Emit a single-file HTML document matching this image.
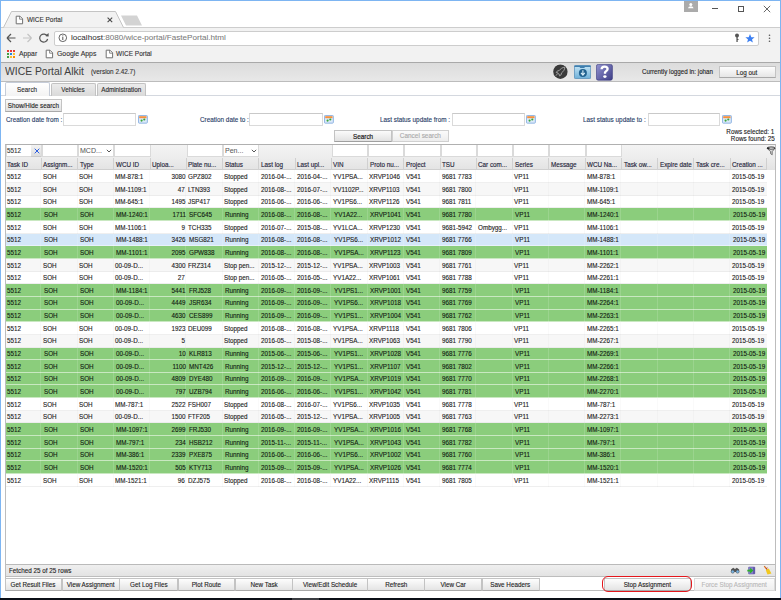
<!DOCTYPE html>
<html><head><meta charset="utf-8">
<style>
*{box-sizing:border-box;}
html,body{margin:0;padding:0;}
body{width:781px;height:600px;overflow:hidden;position:relative;background:#fff;font-family:"Liberation Sans",sans-serif;color:#222;-webkit-text-stroke-width:0.12px;}
.a{position:absolute;}
.t{position:absolute;white-space:nowrap;line-height:1;transform-origin:0 0;}
.tc{position:absolute;white-space:nowrap;line-height:1;text-align:center;}
.tc span{display:inline-block;transform-origin:50% 0;}
.tr{position:absolute;white-space:nowrap;line-height:1;text-align:right;}
.tr span{display:inline-block;transform-origin:100% 0;}
.btn{position:absolute;border:1px solid #c3c3c3;border-bottom-color:#a9a9a9;background:linear-gradient(#fdfdfd,#e6e6e6);}
.inp{position:absolute;border:1px solid #d2d2d2;border-top-color:#bdbdbd;background:#fff;}
</style></head><body>

<div class="a" style="left:1px;top:27px;width:779px;height:35px;background:#f2f2f2"></div>
<div class="a" style="left:1px;top:27px;width:779px;height:1px;background:#cdcdcd"></div>
<svg class="a" style="left:0;top:0" width="160" height="28">
<path d="M3.5 27.5 L11.5 11.5 L115.5 11.5 L123.5 27.5" fill="#f2f2f2" stroke="#c4c4c4" stroke-width="1"/>
<path d="M121 15.5 L137 15.5 L142 25.5 L126 25.5 Z" fill="#d3d3d3"/>
</svg>
<svg class="a" style="left:14.5px;top:15px" width="9" height="10"><path d="M1.2 1.2 H5 L7.6 3.8 V8.8 H1.2 Z" fill="#fff" stroke="#707070" stroke-width="1"/><path d="M4.6 1.2 V4.2 H7.6" fill="none" stroke="#707070" stroke-width="0.8"/></svg>
<div class="t" style="left:26.5px;top:15.64px;font-size:7.4px;color:#333;transform:scaleX(0.87);">WICE Portal</div>
<svg class="a" style="left:107px;top:17px" width="6" height="6"><path d="M0.6 0.6 L5.2 5.2 M5.2 0.6 L0.6 5.2" stroke="#4a4a4a" stroke-width="1.1"/></svg>
<div class="a" style="left:684px;top:1px;width:13.5px;height:11px;background:#ababab"></div>
<svg class="a" style="left:684px;top:0" width="14" height="12"><circle cx="6.8" cy="4.6" r="1.5" fill="#fff"/><path d="M4 8.2 Q4.3 6.3 6.8 6.3 Q9.3 6.3 9.6 8.2 Z" fill="#fff"/></svg>
<div class="a" style="left:712px;top:8px;width:6px;height:1px;background:#555"></div>
<div class="a" style="left:738px;top:5.5px;width:6px;height:6px;border:1px solid #555"></div>
<svg class="a" style="left:763px;top:5px" width="8" height="8"><path d="M0.8 0.8 L7.2 7.2 M7.2 0.8 L0.8 7.2" stroke="#555" stroke-width="0.9"/></svg>
<svg class="a" style="left:5px;top:32px" width="46" height="12">
<path d="M2 6 H10.5 M2 6 L6 2 M2 6 L6 10" stroke="#555" stroke-width="1.2" fill="none"/>
<path d="M26.5 6 H18 M26.5 6 L22.5 2 M26.5 6 L22.5 10" stroke="#c4c4c4" stroke-width="1.2" fill="none"/>
<path d="M42.3 4.3 A4 4 0 1 0 42.6 7" stroke="#555" stroke-width="1.2" fill="none"/>
<path d="M40.2 4 L43.7 4.6 L43.6 1" fill="#555"/>
</svg>
<div class="a" style="left:54px;top:30.5px;width:704.5px;height:15px;background:#fff;border:1px solid #cdcdcd;border-radius:2px"></div>
<svg class="a" style="left:58px;top:33px" width="10" height="10"><circle cx="4.8" cy="4.8" r="3.8" fill="none" stroke="#555" stroke-width="0.9"/><rect x="4.3" y="4" width="1" height="3" fill="#555"/><rect x="4.3" y="2.4" width="1" height="1" fill="#555"/></svg>
<div class="t" style="left:70.8px;top:33.93px;font-size:8px;color:#7a7a7a;transform:scaleX(1.012);-webkit-text-stroke-width:0.05px"><span style="color:#333">localhost</span>:8080/wice-portal/FastePortal.html</div>
<svg class="a" style="left:734px;top:33px" width="22" height="11">
<circle cx="3" cy="2.6" r="2" fill="#555"/><rect x="2.4" y="3" width="1.3" height="6" fill="#555"/><rect x="3" y="6" width="1.5" height="1" fill="#555"/>
<path d="M16 1 L17.3 4.2 L20.6 4.3 L18 6.4 L18.9 9.6 L16 7.8 L13.1 9.6 L14 6.4 L11.4 4.3 L14.7 4.2 Z" fill="#3b7ff2"/>
</svg>
<svg class="a" style="left:768px;top:34px" width="3" height="10"><circle cx="1.5" cy="1.2" r="0.8" fill="#555"/><circle cx="1.5" cy="4.2" r="0.8" fill="#555"/><circle cx="1.5" cy="7.2" r="0.8" fill="#555"/></svg>
<svg class="a" style="left:7px;top:50px" width="9" height="9">
<rect x="0" y="0" width="2" height="2" fill="#e53935"/><rect x="3" y="0" width="2" height="2" fill="#e53935"/><rect x="6" y="0" width="2" height="2" fill="#e53935"/>
<rect x="0" y="3" width="2" height="2" fill="#43a047"/><rect x="3" y="3" width="2" height="2" fill="#1e88e5"/><rect x="6" y="3" width="2" height="2" fill="#fbc02d"/>
<rect x="0" y="6" width="2" height="2" fill="#43a047"/><rect x="3" y="6" width="2" height="2" fill="#fbc02d"/><rect x="6" y="6" width="2" height="2" fill="#fb8c00"/>
</svg>
<div class="t" style="left:19px;top:50.34px;font-size:7.4px;color:#333;transform:scaleX(0.92);">Appar</div>
<svg class="a" style="left:45px;top:49px" width="9" height="10"><path d="M1.2 1.2 H5 L7.6 3.8 V8.8 H1.2 Z" fill="#fff" stroke="#707070" stroke-width="1"/><path d="M4.6 1.2 V4.2 H7.6" fill="none" stroke="#707070" stroke-width="0.8"/></svg>
<div class="t" style="left:57px;top:50.34px;font-size:7.4px;color:#333;transform:scaleX(0.93);">Google Apps</div>
<svg class="a" style="left:104.5px;top:49px" width="9" height="10"><path d="M1.2 1.2 H5 L7.6 3.8 V8.8 H1.2 Z" fill="#fff" stroke="#707070" stroke-width="1"/><path d="M4.6 1.2 V4.2 H7.6" fill="none" stroke="#707070" stroke-width="0.8"/></svg>
<div class="t" style="left:116px;top:50.34px;font-size:7.4px;color:#333;transform:scaleX(0.88);">WICE Portal</div>
<div class="a" style="left:1px;top:62px;width:779px;height:1px;background:#a9a9a9"></div>
<div class="a" style="left:1px;top:63px;width:779px;height:18px;background:linear-gradient(#dcdcdc,#e8e8e8)"></div>
<div class="a" style="left:1px;top:81px;width:779px;height:1px;background:#bcbcbc"></div>
<div class="t" style="left:5px;top:66.34px;font-size:10.7px;color:#404040;transform:scaleX(0.97);-webkit-text-stroke-width:0">WICE Portal Alkit</div>
<div class="t" style="left:91px;top:68.37px;font-size:7px;color:#333;transform:scaleX(0.91);">(version 2.42.7)</div>
<svg class="a" style="left:552px;top:63px" width="17" height="17">
<circle cx="8.4" cy="8.7" r="7.6" fill="#f4f4f4"/>
<circle cx="8.4" cy="8.7" r="7.2" fill="#3a3a3a"/>
<path d="M12.8 4.2 C10.5 4.4 8.6 5.6 7.2 7.6 L5.4 7.9 L4.2 9.6 L6 9.9 L6.3 10.8 L7.2 11.1 L7.5 12.9 L9.2 11.7 L9.5 9.9 C11.5 8.5 12.7 6.6 12.8 4.2 Z" fill="none" stroke="#a8a8a8" stroke-width="0.9" stroke-linejoin="round"/>
<path d="M5.6 10.6 L3.9 12.7" stroke="#a8a8a8" stroke-width="0.9"/>
</svg>
<svg class="a" style="left:574px;top:65.3px" width="17.2" height="14"><defs><linearGradient id="bf" x1="0" y1="0" x2="0" y2="1"><stop offset="0" stop-color="#c3e4f5"/><stop offset="1" stop-color="#6fb0d8"/></linearGradient></defs>
<rect x="0.4" y="0.6" width="16.3" height="13" rx="1" fill="url(#bf)" stroke="#4683b0" stroke-width="0.7"/>
<path d="M0.4 0.6 H16.7 V2 H11 L10.2 2.9 H6.3 L5.5 2 H0.4 Z" fill="#3f7eae"/>
<circle cx="8.9" cy="7.9" r="4" fill="#21618e"/>
<path d="M8.9 5.2 V9.6 M7 7.9 L8.9 10.2 L10.8 7.9" stroke="#d9eef9" stroke-width="1.1" fill="none"/>
</svg>
<svg class="a" style="left:595.5px;top:64px" width="17" height="17"><defs><linearGradient id="pq" x1="0" y1="0" x2="1" y2="1"><stop offset="0" stop-color="#9292d0"/><stop offset="1" stop-color="#3e3e86"/></linearGradient></defs>
<rect x="0.4" y="0.4" width="16" height="15.8" rx="1.8" fill="url(#pq)" stroke="#34347a" stroke-width="0.6"/>
<path d="M5.6 5.3 C5.6 3.6 6.9 2.6 8.5 2.6 C10.3 2.6 11.6 3.6 11.6 5.1 C11.6 6.8 9.3 7.3 9 8.6 V9.8" fill="none" stroke="#fff" stroke-width="2.3"/>
<ellipse cx="8.9" cy="12.6" rx="1.7" ry="1.4" fill="#fff"/>
</svg>
<div class="t" style="left:642px;top:68.37px;font-size:7px;color:#222;transform:scaleX(0.89);">Currently logged in: johan</div>
<div class="a" style="left:718.5px;top:66.3px;width:57px;height:12px;border:1px solid #c3c3c3;border-bottom-color:#a9a9a9;background:linear-gradient(#fdfdfd,#e6e6e6)"></div>
<div class="tc" style="left:718.5px;top:69.07px;width:57px;font-size:7px;color:#222;"><span style="transform:scaleX(0.9)">Log out</span></div>
<div class="a" style="left:1px;top:95px;width:779px;height:1px;background:#d4d8df"></div>
<div class="a" style="left:4.5px;top:82px;width:45px;height:14px;background:linear-gradient(#ffffff,#f3f3f3);border:1px solid #c5ccd8;border-bottom:none;border-radius:2px 2px 0 0"></div>
<div class="tc" style="left:4.5px;top:85.97px;width:45px;font-size:7px;color:#2a2a2a;"><span style="transform:scaleX(0.9)">Search</span></div>
<div class="a" style="left:51px;top:82.5px;width:44.5px;height:13px;background:linear-gradient(#ebebeb,#d9d9d9);border:1px solid #c2c2c2;border-bottom:none;border-radius:2px 2px 0 0"></div>
<div class="tc" style="left:51px;top:85.97px;width:44.5px;font-size:7px;color:#2a2a2a;"><span style="transform:scaleX(0.9)">Vehicles</span></div>
<div class="a" style="left:97px;top:82.5px;width:48.5px;height:13px;background:linear-gradient(#ebebeb,#d9d9d9);border:1px solid #c2c2c2;border-bottom:none;border-radius:2px 2px 0 0"></div>
<div class="tc" style="left:97px;top:85.97px;width:48.5px;font-size:7px;color:#2a2a2a;"><span style="transform:scaleX(0.9)">Administration</span></div>
<div class="a" style="left:4.5px;top:99px;width:57.5px;height:12.5px;border:1px solid #c3c3c3;border-bottom-color:#a9a9a9;background:linear-gradient(#f9f9f9,#e2e2e2)"></div>
<div class="tc" style="left:4.5px;top:101.77px;width:57.5px;font-size:7px;color:#222;"><span style="transform:scaleX(0.9)">Show/Hide search</span></div>
<div class="t" style="left:6px;top:115.57px;font-size:7px;color:#253a66;transform:scaleX(0.91);">Creation date from :</div>
<div class="a" style="left:63.3px;top:113px;width:72.7px;height:12.5px;border:1px solid #dadada;border-top-color:#c9c9c9;background:#fff"></div>
<svg class="a" style="left:138px;top:114.6px" width="10" height="9"><rect x="0.45" y="0.45" width="8.9" height="7.7" rx="0.8" fill="#dce9fa" stroke="#86aee0" stroke-width="0.9"/><rect x="1.2" y="1.2" width="7.3" height="2" fill="#f7913f"/><circle cx="3.6" cy="5.6" r="1.1" fill="#3aa63a"/><circle cx="6.3" cy="4.5" r="1.1" fill="#3aa63a"/></svg>
<div class="t" style="left:199.8px;top:115.57px;font-size:7px;color:#253a66;transform:scaleX(0.91);">Creation date to :</div>
<div class="a" style="left:249.4px;top:113px;width:73.4px;height:12.5px;border:1px solid #dadada;border-top-color:#c9c9c9;background:#fff"></div>
<svg class="a" style="left:324.3px;top:114.6px" width="10" height="9"><rect x="0.45" y="0.45" width="8.9" height="7.7" rx="0.8" fill="#dce9fa" stroke="#86aee0" stroke-width="0.9"/><rect x="1.2" y="1.2" width="7.3" height="2" fill="#f7913f"/><circle cx="3.6" cy="5.6" r="1.1" fill="#3aa63a"/><circle cx="6.3" cy="4.5" r="1.1" fill="#3aa63a"/></svg>
<div class="t" style="left:380.2px;top:115.57px;font-size:7px;color:#253a66;transform:scaleX(0.91);">Last status update from :</div>
<div class="a" style="left:452px;top:113px;width:72.7px;height:12.5px;border:1px solid #dadada;border-top-color:#c9c9c9;background:#fff"></div>
<svg class="a" style="left:526px;top:114.6px" width="10" height="9"><rect x="0.45" y="0.45" width="8.9" height="7.7" rx="0.8" fill="#dce9fa" stroke="#86aee0" stroke-width="0.9"/><rect x="1.2" y="1.2" width="7.3" height="2" fill="#f7913f"/><circle cx="3.6" cy="5.6" r="1.1" fill="#3aa63a"/><circle cx="6.3" cy="4.5" r="1.1" fill="#3aa63a"/></svg>
<div class="t" style="left:583px;top:115.57px;font-size:7px;color:#253a66;transform:scaleX(0.91);">Last status update to :</div>
<div class="a" style="left:647.6px;top:113px;width:72px;height:12.5px;border:1px solid #dadada;border-top-color:#c9c9c9;background:#fff"></div>
<svg class="a" style="left:721.8px;top:114.6px" width="10" height="9"><rect x="0.45" y="0.45" width="8.9" height="7.7" rx="0.8" fill="#dce9fa" stroke="#86aee0" stroke-width="0.9"/><rect x="1.2" y="1.2" width="7.3" height="2" fill="#f7913f"/><circle cx="3.6" cy="5.6" r="1.1" fill="#3aa63a"/><circle cx="6.3" cy="4.5" r="1.1" fill="#3aa63a"/></svg>
<div class="a" style="left:334.2px;top:129.5px;width:57.7px;height:12.2px;border:1px solid #c3c3c3;border-bottom-color:#a0a0a0;background:linear-gradient(#fbfbfb,#e2e2e2)"></div>
<div class="tc" style="left:334.2px;top:132.67px;width:57.7px;font-size:7px;color:#1a1a1a;-webkit-text-stroke-width:0.2px"><span style="transform:scaleX(0.9)">Search</span></div>
<div class="a" style="left:391.6px;top:129.5px;width:57.3px;height:12.2px;border:1px solid #d0d0d0;background:linear-gradient(#fbfbfb,#ededed)"></div>
<div class="tc" style="left:391.6px;top:132.47px;width:57.3px;font-size:7px;color:#a9a9a9;"><span style="transform:scaleX(0.92)">Cancel search</span></div>
<div class="tr" style="left:674.6px;top:128.07px;width:100px;font-size:7px;color:#222;"><span style="transform:scaleX(0.9)">Rows selected: 1</span></div>
<div class="tr" style="left:674.6px;top:134.77px;width:100px;font-size:7px;color:#222;"><span style="transform:scaleX(0.9)">Rows found: 25</span></div>
<div class="a" style="left:5px;top:144px;width:771px;height:447px;border:1px solid #bdbdbd;border-top-color:#b0b0b0;background:#fff"></div>
<div class="a" style="left:6px;top:145px;width:769px;height:24.5px;background:linear-gradient(#f3f3f3 0%,#ededed 50%,#e3e3e3 100%)"></div>
<div class="a" style="left:6px;top:169px;width:760.5px;height:1px;background:#cfcfcf"></div>
<div class="a" style="left:5.5px;top:145px;width:36.26px;height:12px;background:#fff;border:1px solid #dadada;border-top:none"></div>
<div class="t" style="left:6.9px;top:147.27px;font-size:7px;color:#333;transform:scaleX(0.9);">5512</div>
<div class="a" style="left:30.8px;top:145.3px;width:10.5px;height:11.4px;background:linear-gradient(#f3f3f3,#dedede);border-bottom:1px solid #c9c9c9"></div>
<svg class="a" style="left:33.5px;top:148px" width="6" height="6"><path d="M0.7 0.7 L5.3 5.3 M5.3 0.7 L0.7 5.3" stroke="#2d5fe0" stroke-width="1"/></svg>
<div class="a" style="left:40.76px;top:157.5px;width:1px;height:12px;background:#d0d0d0"></div>
<div class="t" style="left:7.1px;top:160.67px;font-size:7px;color:#25253a;transform:scaleX(0.9);-webkit-text-stroke-width:0.15px">Task ID</div>
<div class="a" style="left:41.76px;top:145px;width:36.26px;height:12px;background:#fff;border:1px solid #dadada;border-top:none"></div>
<div class="a" style="left:77.02px;top:157.5px;width:1px;height:12px;background:#d0d0d0"></div>
<div class="t" style="left:43.36px;top:160.67px;font-size:7px;color:#25253a;transform:scaleX(0.9);-webkit-text-stroke-width:0.15px">Assignm...</div>
<div class="a" style="left:78.02px;top:145px;width:36.26px;height:12px;background:#fff;border:1px solid #dadada;border-top:none"></div>
<div class="t" style="left:80.22px;top:147.04px;font-size:7.4px;color:#5a5a5a;transform:scaleX(0.95);-webkit-text-stroke-width:0.05px">MCD...</div>
<svg class="a" style="left:105.82px;top:149.3px" width="6" height="4"><path d="M0.8 0.8 L3 3 L5.2 0.8" stroke="#444" stroke-width="0.9" fill="none"/></svg>
<div class="a" style="left:113.28px;top:157.5px;width:1px;height:12px;background:#d0d0d0"></div>
<div class="t" style="left:79.62px;top:160.67px;font-size:7px;color:#25253a;transform:scaleX(0.9);-webkit-text-stroke-width:0.15px">Type</div>
<div class="a" style="left:114.28px;top:145px;width:36.26px;height:12px;background:#fff;border:1px solid #dadada;border-top:none"></div>
<div class="a" style="left:149.54px;top:157.5px;width:1px;height:12px;background:#d0d0d0"></div>
<div class="t" style="left:115.88px;top:160.67px;font-size:7px;color:#25253a;transform:scaleX(0.9);-webkit-text-stroke-width:0.15px">WCU ID</div>
<div class="a" style="left:185.8px;top:157.5px;width:1px;height:12px;background:#d0d0d0"></div>
<div class="t" style="left:152.14px;top:160.67px;font-size:7px;color:#25253a;transform:scaleX(0.9);-webkit-text-stroke-width:0.15px">Uploa...</div>
<div class="a" style="left:186.8px;top:145px;width:36.26px;height:12px;background:#fff;border:1px solid #dadada;border-top:none"></div>
<div class="a" style="left:222.06px;top:157.5px;width:1px;height:12px;background:#d0d0d0"></div>
<div class="t" style="left:188.4px;top:160.67px;font-size:7px;color:#25253a;transform:scaleX(0.9);-webkit-text-stroke-width:0.15px">Plate nu...</div>
<div class="a" style="left:223.06px;top:145px;width:36.26px;height:12px;background:#fff;border:1px solid #dadada;border-top:none"></div>
<div class="t" style="left:225.26px;top:147.04px;font-size:7.4px;color:#5a5a5a;transform:scaleX(0.95);-webkit-text-stroke-width:0.05px">Pen...</div>
<svg class="a" style="left:250.86px;top:149.3px" width="6" height="4"><path d="M0.8 0.8 L3 3 L5.2 0.8" stroke="#444" stroke-width="0.9" fill="none"/></svg>
<div class="a" style="left:258.32px;top:157.5px;width:1px;height:12px;background:#d0d0d0"></div>
<div class="t" style="left:224.66px;top:160.67px;font-size:7px;color:#25253a;transform:scaleX(0.9);-webkit-text-stroke-width:0.15px">Status</div>
<div class="a" style="left:294.58px;top:157.5px;width:1px;height:12px;background:#d0d0d0"></div>
<div class="t" style="left:260.92px;top:160.67px;font-size:7px;color:#25253a;transform:scaleX(0.9);-webkit-text-stroke-width:0.15px">Last log</div>
<div class="a" style="left:330.84px;top:157.5px;width:1px;height:12px;background:#d0d0d0"></div>
<div class="t" style="left:297.18px;top:160.67px;font-size:7px;color:#25253a;transform:scaleX(0.9);-webkit-text-stroke-width:0.15px">Last upl...</div>
<div class="a" style="left:331.84px;top:145px;width:36.26px;height:12px;background:#fff;border:1px solid #dadada;border-top:none"></div>
<div class="a" style="left:367.1px;top:157.5px;width:1px;height:12px;background:#d0d0d0"></div>
<div class="t" style="left:333.44px;top:160.67px;font-size:7px;color:#25253a;transform:scaleX(0.9);-webkit-text-stroke-width:0.15px">VIN</div>
<div class="a" style="left:368.1px;top:145px;width:36.26px;height:12px;background:#fff;border:1px solid #dadada;border-top:none"></div>
<div class="a" style="left:403.36px;top:157.5px;width:1px;height:12px;background:#d0d0d0"></div>
<div class="t" style="left:369.7px;top:160.67px;font-size:7px;color:#25253a;transform:scaleX(0.9);-webkit-text-stroke-width:0.15px">Proto nu...</div>
<div class="a" style="left:404.36px;top:145px;width:36.26px;height:12px;background:#fff;border:1px solid #dadada;border-top:none"></div>
<div class="a" style="left:439.62px;top:157.5px;width:1px;height:12px;background:#d0d0d0"></div>
<div class="t" style="left:405.96px;top:160.67px;font-size:7px;color:#25253a;transform:scaleX(0.9);-webkit-text-stroke-width:0.15px">Project</div>
<div class="a" style="left:440.62px;top:145px;width:36.26px;height:12px;background:#fff;border:1px solid #dadada;border-top:none"></div>
<div class="a" style="left:475.88px;top:157.5px;width:1px;height:12px;background:#d0d0d0"></div>
<div class="t" style="left:442.22px;top:160.67px;font-size:7px;color:#25253a;transform:scaleX(0.9);-webkit-text-stroke-width:0.15px">TSU</div>
<div class="a" style="left:476.88px;top:145px;width:36.26px;height:12px;background:#fff;border:1px solid #dadada;border-top:none"></div>
<div class="a" style="left:512.14px;top:157.5px;width:1px;height:12px;background:#d0d0d0"></div>
<div class="t" style="left:478.48px;top:160.67px;font-size:7px;color:#25253a;transform:scaleX(0.9);-webkit-text-stroke-width:0.15px">Car com...</div>
<div class="a" style="left:513.14px;top:145px;width:36.26px;height:12px;background:#fff;border:1px solid #dadada;border-top:none"></div>
<div class="a" style="left:548.4px;top:157.5px;width:1px;height:12px;background:#d0d0d0"></div>
<div class="t" style="left:514.74px;top:160.67px;font-size:7px;color:#25253a;transform:scaleX(0.9);-webkit-text-stroke-width:0.15px">Series</div>
<div class="a" style="left:549.4px;top:145px;width:36.26px;height:12px;background:#fff;border:1px solid #dadada;border-top:none"></div>
<div class="a" style="left:584.66px;top:157.5px;width:1px;height:12px;background:#d0d0d0"></div>
<div class="t" style="left:551px;top:160.67px;font-size:7px;color:#25253a;transform:scaleX(0.9);-webkit-text-stroke-width:0.15px">Message</div>
<div class="a" style="left:585.66px;top:145px;width:36.26px;height:12px;background:#fff;border:1px solid #dadada;border-top:none"></div>
<div class="a" style="left:620.92px;top:157.5px;width:1px;height:12px;background:#d0d0d0"></div>
<div class="t" style="left:587.26px;top:160.67px;font-size:7px;color:#25253a;transform:scaleX(0.9);-webkit-text-stroke-width:0.15px">WCU Na...</div>
<div class="a" style="left:657.18px;top:157.5px;width:1px;height:12px;background:#d0d0d0"></div>
<div class="t" style="left:623.52px;top:160.67px;font-size:7px;color:#25253a;transform:scaleX(0.9);-webkit-text-stroke-width:0.15px">Task ow...</div>
<div class="a" style="left:693.44px;top:157.5px;width:1px;height:12px;background:#d0d0d0"></div>
<div class="t" style="left:659.78px;top:160.67px;font-size:7px;color:#25253a;transform:scaleX(0.9);-webkit-text-stroke-width:0.15px">Expire date</div>
<div class="a" style="left:729.7px;top:157.5px;width:1px;height:12px;background:#d0d0d0"></div>
<div class="t" style="left:696.04px;top:160.67px;font-size:7px;color:#25253a;transform:scaleX(0.9);-webkit-text-stroke-width:0.15px">Task cre...</div>
<div class="a" style="left:765.96px;top:157.5px;width:1px;height:12px;background:#d0d0d0"></div>
<div class="t" style="left:732.3px;top:160.67px;font-size:7px;color:#25253a;transform:scaleX(0.9);-webkit-text-stroke-width:0.15px">Creation ...</div>
<svg class="a" style="left:766px;top:145.5px" width="10" height="10">
<path d="M1 2.3 C1 1.2 9 0.8 9.2 2 L6.2 5.6 V8.8 L4.6 7.6 V5.6 Z" fill="#d8d8d8" stroke="#4a4a4a" stroke-width="0.7"/>
<ellipse cx="5" cy="2.1" rx="4" ry="1.1" fill="#f4f4f4" stroke="#2a2a2a" stroke-width="0.8"/>
<ellipse cx="2.3" cy="2.2" rx="1.4" ry="0.8" fill="#222"/>
</svg>
<div class="a" style="left:6px;top:170px;width:760.5px;height:13px;background:#ffffff"></div>
<div class="a" style="left:6px;top:183px;width:760.5px;height:13px;background:#f7f7f7"></div>
<div class="a" style="left:6px;top:196px;width:760.5px;height:12px;background:#ffffff"></div>
<div class="a" style="left:6px;top:208px;width:760.5px;height:13px;background:#8bcd7c"></div>
<div class="a" style="left:6px;top:221px;width:760.5px;height:13px;background:#ffffff"></div>
<div class="a" style="left:6px;top:234px;width:760.5px;height:12px;background:#d4e7f9"></div>
<div class="a" style="left:6px;top:246px;width:760.5px;height:13px;background:#8bcd7c"></div>
<div class="a" style="left:6px;top:259px;width:760.5px;height:13px;background:#f7f7f7"></div>
<div class="a" style="left:6px;top:272px;width:760.5px;height:12px;background:#ffffff"></div>
<div class="a" style="left:6px;top:284px;width:760.5px;height:13px;background:#8bcd7c"></div>
<div class="a" style="left:6px;top:297px;width:760.5px;height:13px;background:#8bcd7c"></div>
<div class="a" style="left:6px;top:310px;width:760.5px;height:12px;background:#8bcd7c"></div>
<div class="a" style="left:6px;top:322px;width:760.5px;height:13px;background:#ffffff"></div>
<div class="a" style="left:6px;top:335px;width:760.5px;height:13px;background:#f7f7f7"></div>
<div class="a" style="left:6px;top:348px;width:760.5px;height:12px;background:#8bcd7c"></div>
<div class="a" style="left:6px;top:360px;width:760.5px;height:13px;background:#8bcd7c"></div>
<div class="a" style="left:6px;top:373px;width:760.5px;height:12px;background:#8bcd7c"></div>
<div class="a" style="left:6px;top:385px;width:760.5px;height:13px;background:#8bcd7c"></div>
<div class="a" style="left:6px;top:398px;width:760.5px;height:13px;background:#ffffff"></div>
<div class="a" style="left:6px;top:411px;width:760.5px;height:12px;background:#f7f7f7"></div>
<div class="a" style="left:6px;top:423px;width:760.5px;height:13px;background:#8bcd7c"></div>
<div class="a" style="left:6px;top:436px;width:760.5px;height:13px;background:#8bcd7c"></div>
<div class="a" style="left:6px;top:449px;width:760.5px;height:12px;background:#8bcd7c"></div>
<div class="a" style="left:6px;top:461px;width:760.5px;height:13px;background:#8bcd7c"></div>
<div class="a" style="left:6px;top:474px;width:760.5px;height:13px;background:#ffffff"></div>
<div class="a" style="left:6px;top:182px;width:760.5px;height:1px;background:#efefef"></div>
<div class="a" style="left:6px;top:195px;width:760.5px;height:1px;background:#ececec"></div>
<div class="a" style="left:6px;top:207px;width:760.5px;height:1px;background:#efefef"></div>
<div class="a" style="left:6px;top:220px;width:760.5px;height:1px;background:#c9e8c1"></div>
<div class="a" style="left:6px;top:233px;width:760.5px;height:1px;background:#efefef"></div>
<div class="a" style="left:6px;top:245px;width:760.5px;height:1px;background:#e8f1fb"></div>
<div class="a" style="left:6px;top:258px;width:760.5px;height:1px;background:#c9e8c1"></div>
<div class="a" style="left:6px;top:271px;width:760.5px;height:1px;background:#ececec"></div>
<div class="a" style="left:6px;top:283px;width:760.5px;height:1px;background:#efefef"></div>
<div class="a" style="left:6px;top:296px;width:760.5px;height:1px;background:#c9e8c1"></div>
<div class="a" style="left:6px;top:309px;width:760.5px;height:1px;background:#c9e8c1"></div>
<div class="a" style="left:6px;top:321px;width:760.5px;height:1px;background:#c9e8c1"></div>
<div class="a" style="left:6px;top:334px;width:760.5px;height:1px;background:#efefef"></div>
<div class="a" style="left:6px;top:347px;width:760.5px;height:1px;background:#ececec"></div>
<div class="a" style="left:6px;top:359px;width:760.5px;height:1px;background:#c9e8c1"></div>
<div class="a" style="left:6px;top:372px;width:760.5px;height:1px;background:#c9e8c1"></div>
<div class="a" style="left:6px;top:384px;width:760.5px;height:1px;background:#c9e8c1"></div>
<div class="a" style="left:6px;top:397px;width:760.5px;height:1px;background:#c9e8c1"></div>
<div class="a" style="left:6px;top:410px;width:760.5px;height:1px;background:#efefef"></div>
<div class="a" style="left:6px;top:422px;width:760.5px;height:1px;background:#ececec"></div>
<div class="a" style="left:6px;top:435px;width:760.5px;height:1px;background:#c9e8c1"></div>
<div class="a" style="left:6px;top:448px;width:760.5px;height:1px;background:#c9e8c1"></div>
<div class="a" style="left:6px;top:460px;width:760.5px;height:1px;background:#c9e8c1"></div>
<div class="a" style="left:6px;top:473px;width:760.5px;height:1px;background:#c9e8c1"></div>
<div class="a" style="left:6px;top:486px;width:760.5px;height:1px;background:#efefef"></div>
<div class="a" style="left:40px;top:170px;width:1px;height:38px;background:rgba(0,0,0,0.018)"></div>
<div class="a" style="left:77px;top:170px;width:1px;height:38px;background:rgba(0,0,0,0.018)"></div>
<div class="a" style="left:113px;top:170px;width:1px;height:38px;background:rgba(0,0,0,0.018)"></div>
<div class="a" style="left:149px;top:170px;width:1px;height:38px;background:rgba(0,0,0,0.018)"></div>
<div class="a" style="left:185px;top:170px;width:1px;height:38px;background:rgba(0,0,0,0.018)"></div>
<div class="a" style="left:222px;top:170px;width:1px;height:38px;background:rgba(0,0,0,0.018)"></div>
<div class="a" style="left:258px;top:170px;width:1px;height:38px;background:rgba(0,0,0,0.018)"></div>
<div class="a" style="left:294px;top:170px;width:1px;height:38px;background:rgba(0,0,0,0.018)"></div>
<div class="a" style="left:330px;top:170px;width:1px;height:38px;background:rgba(0,0,0,0.018)"></div>
<div class="a" style="left:367px;top:170px;width:1px;height:38px;background:rgba(0,0,0,0.018)"></div>
<div class="a" style="left:403px;top:170px;width:1px;height:38px;background:rgba(0,0,0,0.018)"></div>
<div class="a" style="left:439px;top:170px;width:1px;height:38px;background:rgba(0,0,0,0.018)"></div>
<div class="a" style="left:475px;top:170px;width:1px;height:38px;background:rgba(0,0,0,0.018)"></div>
<div class="a" style="left:512px;top:170px;width:1px;height:38px;background:rgba(0,0,0,0.018)"></div>
<div class="a" style="left:548px;top:170px;width:1px;height:38px;background:rgba(0,0,0,0.018)"></div>
<div class="a" style="left:584px;top:170px;width:1px;height:38px;background:rgba(0,0,0,0.018)"></div>
<div class="a" style="left:620px;top:170px;width:1px;height:38px;background:rgba(0,0,0,0.018)"></div>
<div class="a" style="left:657px;top:170px;width:1px;height:38px;background:rgba(0,0,0,0.018)"></div>
<div class="a" style="left:693px;top:170px;width:1px;height:38px;background:rgba(0,0,0,0.018)"></div>
<div class="a" style="left:729px;top:170px;width:1px;height:38px;background:rgba(0,0,0,0.018)"></div>
<div class="a" style="left:40px;top:208px;width:1px;height:13px;background:rgba(255,255,255,0.14)"></div>
<div class="a" style="left:77px;top:208px;width:1px;height:13px;background:rgba(255,255,255,0.14)"></div>
<div class="a" style="left:113px;top:208px;width:1px;height:13px;background:rgba(255,255,255,0.14)"></div>
<div class="a" style="left:149px;top:208px;width:1px;height:13px;background:rgba(255,255,255,0.14)"></div>
<div class="a" style="left:185px;top:208px;width:1px;height:13px;background:rgba(255,255,255,0.14)"></div>
<div class="a" style="left:222px;top:208px;width:1px;height:13px;background:rgba(255,255,255,0.14)"></div>
<div class="a" style="left:258px;top:208px;width:1px;height:13px;background:rgba(255,255,255,0.14)"></div>
<div class="a" style="left:294px;top:208px;width:1px;height:13px;background:rgba(255,255,255,0.14)"></div>
<div class="a" style="left:330px;top:208px;width:1px;height:13px;background:rgba(255,255,255,0.14)"></div>
<div class="a" style="left:367px;top:208px;width:1px;height:13px;background:rgba(255,255,255,0.14)"></div>
<div class="a" style="left:403px;top:208px;width:1px;height:13px;background:rgba(255,255,255,0.14)"></div>
<div class="a" style="left:439px;top:208px;width:1px;height:13px;background:rgba(255,255,255,0.14)"></div>
<div class="a" style="left:475px;top:208px;width:1px;height:13px;background:rgba(255,255,255,0.14)"></div>
<div class="a" style="left:512px;top:208px;width:1px;height:13px;background:rgba(255,255,255,0.14)"></div>
<div class="a" style="left:548px;top:208px;width:1px;height:13px;background:rgba(255,255,255,0.14)"></div>
<div class="a" style="left:584px;top:208px;width:1px;height:13px;background:rgba(255,255,255,0.14)"></div>
<div class="a" style="left:620px;top:208px;width:1px;height:13px;background:rgba(255,255,255,0.14)"></div>
<div class="a" style="left:657px;top:208px;width:1px;height:13px;background:rgba(255,255,255,0.14)"></div>
<div class="a" style="left:693px;top:208px;width:1px;height:13px;background:rgba(255,255,255,0.14)"></div>
<div class="a" style="left:729px;top:208px;width:1px;height:13px;background:rgba(255,255,255,0.14)"></div>
<div class="a" style="left:40px;top:221px;width:1px;height:13px;background:rgba(0,0,0,0.018)"></div>
<div class="a" style="left:77px;top:221px;width:1px;height:13px;background:rgba(0,0,0,0.018)"></div>
<div class="a" style="left:113px;top:221px;width:1px;height:13px;background:rgba(0,0,0,0.018)"></div>
<div class="a" style="left:149px;top:221px;width:1px;height:13px;background:rgba(0,0,0,0.018)"></div>
<div class="a" style="left:185px;top:221px;width:1px;height:13px;background:rgba(0,0,0,0.018)"></div>
<div class="a" style="left:222px;top:221px;width:1px;height:13px;background:rgba(0,0,0,0.018)"></div>
<div class="a" style="left:258px;top:221px;width:1px;height:13px;background:rgba(0,0,0,0.018)"></div>
<div class="a" style="left:294px;top:221px;width:1px;height:13px;background:rgba(0,0,0,0.018)"></div>
<div class="a" style="left:330px;top:221px;width:1px;height:13px;background:rgba(0,0,0,0.018)"></div>
<div class="a" style="left:367px;top:221px;width:1px;height:13px;background:rgba(0,0,0,0.018)"></div>
<div class="a" style="left:403px;top:221px;width:1px;height:13px;background:rgba(0,0,0,0.018)"></div>
<div class="a" style="left:439px;top:221px;width:1px;height:13px;background:rgba(0,0,0,0.018)"></div>
<div class="a" style="left:475px;top:221px;width:1px;height:13px;background:rgba(0,0,0,0.018)"></div>
<div class="a" style="left:512px;top:221px;width:1px;height:13px;background:rgba(0,0,0,0.018)"></div>
<div class="a" style="left:548px;top:221px;width:1px;height:13px;background:rgba(0,0,0,0.018)"></div>
<div class="a" style="left:584px;top:221px;width:1px;height:13px;background:rgba(0,0,0,0.018)"></div>
<div class="a" style="left:620px;top:221px;width:1px;height:13px;background:rgba(0,0,0,0.018)"></div>
<div class="a" style="left:657px;top:221px;width:1px;height:13px;background:rgba(0,0,0,0.018)"></div>
<div class="a" style="left:693px;top:221px;width:1px;height:13px;background:rgba(0,0,0,0.018)"></div>
<div class="a" style="left:729px;top:221px;width:1px;height:13px;background:rgba(0,0,0,0.018)"></div>
<div class="a" style="left:40px;top:234px;width:1px;height:25px;background:rgba(255,255,255,0.14)"></div>
<div class="a" style="left:77px;top:234px;width:1px;height:25px;background:rgba(255,255,255,0.14)"></div>
<div class="a" style="left:113px;top:234px;width:1px;height:25px;background:rgba(255,255,255,0.14)"></div>
<div class="a" style="left:149px;top:234px;width:1px;height:25px;background:rgba(255,255,255,0.14)"></div>
<div class="a" style="left:185px;top:234px;width:1px;height:25px;background:rgba(255,255,255,0.14)"></div>
<div class="a" style="left:222px;top:234px;width:1px;height:25px;background:rgba(255,255,255,0.14)"></div>
<div class="a" style="left:258px;top:234px;width:1px;height:25px;background:rgba(255,255,255,0.14)"></div>
<div class="a" style="left:294px;top:234px;width:1px;height:25px;background:rgba(255,255,255,0.14)"></div>
<div class="a" style="left:330px;top:234px;width:1px;height:25px;background:rgba(255,255,255,0.14)"></div>
<div class="a" style="left:367px;top:234px;width:1px;height:25px;background:rgba(255,255,255,0.14)"></div>
<div class="a" style="left:403px;top:234px;width:1px;height:25px;background:rgba(255,255,255,0.14)"></div>
<div class="a" style="left:439px;top:234px;width:1px;height:25px;background:rgba(255,255,255,0.14)"></div>
<div class="a" style="left:475px;top:234px;width:1px;height:25px;background:rgba(255,255,255,0.14)"></div>
<div class="a" style="left:512px;top:234px;width:1px;height:25px;background:rgba(255,255,255,0.14)"></div>
<div class="a" style="left:548px;top:234px;width:1px;height:25px;background:rgba(255,255,255,0.14)"></div>
<div class="a" style="left:584px;top:234px;width:1px;height:25px;background:rgba(255,255,255,0.14)"></div>
<div class="a" style="left:620px;top:234px;width:1px;height:25px;background:rgba(255,255,255,0.14)"></div>
<div class="a" style="left:657px;top:234px;width:1px;height:25px;background:rgba(255,255,255,0.14)"></div>
<div class="a" style="left:693px;top:234px;width:1px;height:25px;background:rgba(255,255,255,0.14)"></div>
<div class="a" style="left:729px;top:234px;width:1px;height:25px;background:rgba(255,255,255,0.14)"></div>
<div class="a" style="left:40px;top:259px;width:1px;height:25px;background:rgba(0,0,0,0.018)"></div>
<div class="a" style="left:77px;top:259px;width:1px;height:25px;background:rgba(0,0,0,0.018)"></div>
<div class="a" style="left:113px;top:259px;width:1px;height:25px;background:rgba(0,0,0,0.018)"></div>
<div class="a" style="left:149px;top:259px;width:1px;height:25px;background:rgba(0,0,0,0.018)"></div>
<div class="a" style="left:185px;top:259px;width:1px;height:25px;background:rgba(0,0,0,0.018)"></div>
<div class="a" style="left:222px;top:259px;width:1px;height:25px;background:rgba(0,0,0,0.018)"></div>
<div class="a" style="left:258px;top:259px;width:1px;height:25px;background:rgba(0,0,0,0.018)"></div>
<div class="a" style="left:294px;top:259px;width:1px;height:25px;background:rgba(0,0,0,0.018)"></div>
<div class="a" style="left:330px;top:259px;width:1px;height:25px;background:rgba(0,0,0,0.018)"></div>
<div class="a" style="left:367px;top:259px;width:1px;height:25px;background:rgba(0,0,0,0.018)"></div>
<div class="a" style="left:403px;top:259px;width:1px;height:25px;background:rgba(0,0,0,0.018)"></div>
<div class="a" style="left:439px;top:259px;width:1px;height:25px;background:rgba(0,0,0,0.018)"></div>
<div class="a" style="left:475px;top:259px;width:1px;height:25px;background:rgba(0,0,0,0.018)"></div>
<div class="a" style="left:512px;top:259px;width:1px;height:25px;background:rgba(0,0,0,0.018)"></div>
<div class="a" style="left:548px;top:259px;width:1px;height:25px;background:rgba(0,0,0,0.018)"></div>
<div class="a" style="left:584px;top:259px;width:1px;height:25px;background:rgba(0,0,0,0.018)"></div>
<div class="a" style="left:620px;top:259px;width:1px;height:25px;background:rgba(0,0,0,0.018)"></div>
<div class="a" style="left:657px;top:259px;width:1px;height:25px;background:rgba(0,0,0,0.018)"></div>
<div class="a" style="left:693px;top:259px;width:1px;height:25px;background:rgba(0,0,0,0.018)"></div>
<div class="a" style="left:729px;top:259px;width:1px;height:25px;background:rgba(0,0,0,0.018)"></div>
<div class="a" style="left:40px;top:284px;width:1px;height:38px;background:rgba(255,255,255,0.14)"></div>
<div class="a" style="left:77px;top:284px;width:1px;height:38px;background:rgba(255,255,255,0.14)"></div>
<div class="a" style="left:113px;top:284px;width:1px;height:38px;background:rgba(255,255,255,0.14)"></div>
<div class="a" style="left:149px;top:284px;width:1px;height:38px;background:rgba(255,255,255,0.14)"></div>
<div class="a" style="left:185px;top:284px;width:1px;height:38px;background:rgba(255,255,255,0.14)"></div>
<div class="a" style="left:222px;top:284px;width:1px;height:38px;background:rgba(255,255,255,0.14)"></div>
<div class="a" style="left:258px;top:284px;width:1px;height:38px;background:rgba(255,255,255,0.14)"></div>
<div class="a" style="left:294px;top:284px;width:1px;height:38px;background:rgba(255,255,255,0.14)"></div>
<div class="a" style="left:330px;top:284px;width:1px;height:38px;background:rgba(255,255,255,0.14)"></div>
<div class="a" style="left:367px;top:284px;width:1px;height:38px;background:rgba(255,255,255,0.14)"></div>
<div class="a" style="left:403px;top:284px;width:1px;height:38px;background:rgba(255,255,255,0.14)"></div>
<div class="a" style="left:439px;top:284px;width:1px;height:38px;background:rgba(255,255,255,0.14)"></div>
<div class="a" style="left:475px;top:284px;width:1px;height:38px;background:rgba(255,255,255,0.14)"></div>
<div class="a" style="left:512px;top:284px;width:1px;height:38px;background:rgba(255,255,255,0.14)"></div>
<div class="a" style="left:548px;top:284px;width:1px;height:38px;background:rgba(255,255,255,0.14)"></div>
<div class="a" style="left:584px;top:284px;width:1px;height:38px;background:rgba(255,255,255,0.14)"></div>
<div class="a" style="left:620px;top:284px;width:1px;height:38px;background:rgba(255,255,255,0.14)"></div>
<div class="a" style="left:657px;top:284px;width:1px;height:38px;background:rgba(255,255,255,0.14)"></div>
<div class="a" style="left:693px;top:284px;width:1px;height:38px;background:rgba(255,255,255,0.14)"></div>
<div class="a" style="left:729px;top:284px;width:1px;height:38px;background:rgba(255,255,255,0.14)"></div>
<div class="a" style="left:40px;top:322px;width:1px;height:26px;background:rgba(0,0,0,0.018)"></div>
<div class="a" style="left:77px;top:322px;width:1px;height:26px;background:rgba(0,0,0,0.018)"></div>
<div class="a" style="left:113px;top:322px;width:1px;height:26px;background:rgba(0,0,0,0.018)"></div>
<div class="a" style="left:149px;top:322px;width:1px;height:26px;background:rgba(0,0,0,0.018)"></div>
<div class="a" style="left:185px;top:322px;width:1px;height:26px;background:rgba(0,0,0,0.018)"></div>
<div class="a" style="left:222px;top:322px;width:1px;height:26px;background:rgba(0,0,0,0.018)"></div>
<div class="a" style="left:258px;top:322px;width:1px;height:26px;background:rgba(0,0,0,0.018)"></div>
<div class="a" style="left:294px;top:322px;width:1px;height:26px;background:rgba(0,0,0,0.018)"></div>
<div class="a" style="left:330px;top:322px;width:1px;height:26px;background:rgba(0,0,0,0.018)"></div>
<div class="a" style="left:367px;top:322px;width:1px;height:26px;background:rgba(0,0,0,0.018)"></div>
<div class="a" style="left:403px;top:322px;width:1px;height:26px;background:rgba(0,0,0,0.018)"></div>
<div class="a" style="left:439px;top:322px;width:1px;height:26px;background:rgba(0,0,0,0.018)"></div>
<div class="a" style="left:475px;top:322px;width:1px;height:26px;background:rgba(0,0,0,0.018)"></div>
<div class="a" style="left:512px;top:322px;width:1px;height:26px;background:rgba(0,0,0,0.018)"></div>
<div class="a" style="left:548px;top:322px;width:1px;height:26px;background:rgba(0,0,0,0.018)"></div>
<div class="a" style="left:584px;top:322px;width:1px;height:26px;background:rgba(0,0,0,0.018)"></div>
<div class="a" style="left:620px;top:322px;width:1px;height:26px;background:rgba(0,0,0,0.018)"></div>
<div class="a" style="left:657px;top:322px;width:1px;height:26px;background:rgba(0,0,0,0.018)"></div>
<div class="a" style="left:693px;top:322px;width:1px;height:26px;background:rgba(0,0,0,0.018)"></div>
<div class="a" style="left:729px;top:322px;width:1px;height:26px;background:rgba(0,0,0,0.018)"></div>
<div class="a" style="left:40px;top:348px;width:1px;height:50px;background:rgba(255,255,255,0.14)"></div>
<div class="a" style="left:77px;top:348px;width:1px;height:50px;background:rgba(255,255,255,0.14)"></div>
<div class="a" style="left:113px;top:348px;width:1px;height:50px;background:rgba(255,255,255,0.14)"></div>
<div class="a" style="left:149px;top:348px;width:1px;height:50px;background:rgba(255,255,255,0.14)"></div>
<div class="a" style="left:185px;top:348px;width:1px;height:50px;background:rgba(255,255,255,0.14)"></div>
<div class="a" style="left:222px;top:348px;width:1px;height:50px;background:rgba(255,255,255,0.14)"></div>
<div class="a" style="left:258px;top:348px;width:1px;height:50px;background:rgba(255,255,255,0.14)"></div>
<div class="a" style="left:294px;top:348px;width:1px;height:50px;background:rgba(255,255,255,0.14)"></div>
<div class="a" style="left:330px;top:348px;width:1px;height:50px;background:rgba(255,255,255,0.14)"></div>
<div class="a" style="left:367px;top:348px;width:1px;height:50px;background:rgba(255,255,255,0.14)"></div>
<div class="a" style="left:403px;top:348px;width:1px;height:50px;background:rgba(255,255,255,0.14)"></div>
<div class="a" style="left:439px;top:348px;width:1px;height:50px;background:rgba(255,255,255,0.14)"></div>
<div class="a" style="left:475px;top:348px;width:1px;height:50px;background:rgba(255,255,255,0.14)"></div>
<div class="a" style="left:512px;top:348px;width:1px;height:50px;background:rgba(255,255,255,0.14)"></div>
<div class="a" style="left:548px;top:348px;width:1px;height:50px;background:rgba(255,255,255,0.14)"></div>
<div class="a" style="left:584px;top:348px;width:1px;height:50px;background:rgba(255,255,255,0.14)"></div>
<div class="a" style="left:620px;top:348px;width:1px;height:50px;background:rgba(255,255,255,0.14)"></div>
<div class="a" style="left:657px;top:348px;width:1px;height:50px;background:rgba(255,255,255,0.14)"></div>
<div class="a" style="left:693px;top:348px;width:1px;height:50px;background:rgba(255,255,255,0.14)"></div>
<div class="a" style="left:729px;top:348px;width:1px;height:50px;background:rgba(255,255,255,0.14)"></div>
<div class="a" style="left:40px;top:398px;width:1px;height:25px;background:rgba(0,0,0,0.018)"></div>
<div class="a" style="left:77px;top:398px;width:1px;height:25px;background:rgba(0,0,0,0.018)"></div>
<div class="a" style="left:113px;top:398px;width:1px;height:25px;background:rgba(0,0,0,0.018)"></div>
<div class="a" style="left:149px;top:398px;width:1px;height:25px;background:rgba(0,0,0,0.018)"></div>
<div class="a" style="left:185px;top:398px;width:1px;height:25px;background:rgba(0,0,0,0.018)"></div>
<div class="a" style="left:222px;top:398px;width:1px;height:25px;background:rgba(0,0,0,0.018)"></div>
<div class="a" style="left:258px;top:398px;width:1px;height:25px;background:rgba(0,0,0,0.018)"></div>
<div class="a" style="left:294px;top:398px;width:1px;height:25px;background:rgba(0,0,0,0.018)"></div>
<div class="a" style="left:330px;top:398px;width:1px;height:25px;background:rgba(0,0,0,0.018)"></div>
<div class="a" style="left:367px;top:398px;width:1px;height:25px;background:rgba(0,0,0,0.018)"></div>
<div class="a" style="left:403px;top:398px;width:1px;height:25px;background:rgba(0,0,0,0.018)"></div>
<div class="a" style="left:439px;top:398px;width:1px;height:25px;background:rgba(0,0,0,0.018)"></div>
<div class="a" style="left:475px;top:398px;width:1px;height:25px;background:rgba(0,0,0,0.018)"></div>
<div class="a" style="left:512px;top:398px;width:1px;height:25px;background:rgba(0,0,0,0.018)"></div>
<div class="a" style="left:548px;top:398px;width:1px;height:25px;background:rgba(0,0,0,0.018)"></div>
<div class="a" style="left:584px;top:398px;width:1px;height:25px;background:rgba(0,0,0,0.018)"></div>
<div class="a" style="left:620px;top:398px;width:1px;height:25px;background:rgba(0,0,0,0.018)"></div>
<div class="a" style="left:657px;top:398px;width:1px;height:25px;background:rgba(0,0,0,0.018)"></div>
<div class="a" style="left:693px;top:398px;width:1px;height:25px;background:rgba(0,0,0,0.018)"></div>
<div class="a" style="left:729px;top:398px;width:1px;height:25px;background:rgba(0,0,0,0.018)"></div>
<div class="a" style="left:40px;top:423px;width:1px;height:51px;background:rgba(255,255,255,0.14)"></div>
<div class="a" style="left:77px;top:423px;width:1px;height:51px;background:rgba(255,255,255,0.14)"></div>
<div class="a" style="left:113px;top:423px;width:1px;height:51px;background:rgba(255,255,255,0.14)"></div>
<div class="a" style="left:149px;top:423px;width:1px;height:51px;background:rgba(255,255,255,0.14)"></div>
<div class="a" style="left:185px;top:423px;width:1px;height:51px;background:rgba(255,255,255,0.14)"></div>
<div class="a" style="left:222px;top:423px;width:1px;height:51px;background:rgba(255,255,255,0.14)"></div>
<div class="a" style="left:258px;top:423px;width:1px;height:51px;background:rgba(255,255,255,0.14)"></div>
<div class="a" style="left:294px;top:423px;width:1px;height:51px;background:rgba(255,255,255,0.14)"></div>
<div class="a" style="left:330px;top:423px;width:1px;height:51px;background:rgba(255,255,255,0.14)"></div>
<div class="a" style="left:367px;top:423px;width:1px;height:51px;background:rgba(255,255,255,0.14)"></div>
<div class="a" style="left:403px;top:423px;width:1px;height:51px;background:rgba(255,255,255,0.14)"></div>
<div class="a" style="left:439px;top:423px;width:1px;height:51px;background:rgba(255,255,255,0.14)"></div>
<div class="a" style="left:475px;top:423px;width:1px;height:51px;background:rgba(255,255,255,0.14)"></div>
<div class="a" style="left:512px;top:423px;width:1px;height:51px;background:rgba(255,255,255,0.14)"></div>
<div class="a" style="left:548px;top:423px;width:1px;height:51px;background:rgba(255,255,255,0.14)"></div>
<div class="a" style="left:584px;top:423px;width:1px;height:51px;background:rgba(255,255,255,0.14)"></div>
<div class="a" style="left:620px;top:423px;width:1px;height:51px;background:rgba(255,255,255,0.14)"></div>
<div class="a" style="left:657px;top:423px;width:1px;height:51px;background:rgba(255,255,255,0.14)"></div>
<div class="a" style="left:693px;top:423px;width:1px;height:51px;background:rgba(255,255,255,0.14)"></div>
<div class="a" style="left:729px;top:423px;width:1px;height:51px;background:rgba(255,255,255,0.14)"></div>
<div class="a" style="left:40px;top:474px;width:1px;height:13px;background:rgba(0,0,0,0.018)"></div>
<div class="a" style="left:77px;top:474px;width:1px;height:13px;background:rgba(0,0,0,0.018)"></div>
<div class="a" style="left:113px;top:474px;width:1px;height:13px;background:rgba(0,0,0,0.018)"></div>
<div class="a" style="left:149px;top:474px;width:1px;height:13px;background:rgba(0,0,0,0.018)"></div>
<div class="a" style="left:185px;top:474px;width:1px;height:13px;background:rgba(0,0,0,0.018)"></div>
<div class="a" style="left:222px;top:474px;width:1px;height:13px;background:rgba(0,0,0,0.018)"></div>
<div class="a" style="left:258px;top:474px;width:1px;height:13px;background:rgba(0,0,0,0.018)"></div>
<div class="a" style="left:294px;top:474px;width:1px;height:13px;background:rgba(0,0,0,0.018)"></div>
<div class="a" style="left:330px;top:474px;width:1px;height:13px;background:rgba(0,0,0,0.018)"></div>
<div class="a" style="left:367px;top:474px;width:1px;height:13px;background:rgba(0,0,0,0.018)"></div>
<div class="a" style="left:403px;top:474px;width:1px;height:13px;background:rgba(0,0,0,0.018)"></div>
<div class="a" style="left:439px;top:474px;width:1px;height:13px;background:rgba(0,0,0,0.018)"></div>
<div class="a" style="left:475px;top:474px;width:1px;height:13px;background:rgba(0,0,0,0.018)"></div>
<div class="a" style="left:512px;top:474px;width:1px;height:13px;background:rgba(0,0,0,0.018)"></div>
<div class="a" style="left:548px;top:474px;width:1px;height:13px;background:rgba(0,0,0,0.018)"></div>
<div class="a" style="left:584px;top:474px;width:1px;height:13px;background:rgba(0,0,0,0.018)"></div>
<div class="a" style="left:620px;top:474px;width:1px;height:13px;background:rgba(0,0,0,0.018)"></div>
<div class="a" style="left:657px;top:474px;width:1px;height:13px;background:rgba(0,0,0,0.018)"></div>
<div class="a" style="left:693px;top:474px;width:1px;height:13px;background:rgba(0,0,0,0.018)"></div>
<div class="a" style="left:729px;top:474px;width:1px;height:13px;background:rgba(0,0,0,0.018)"></div>
<div class="t" style="left:6.7px;top:172.97px;font-size:7px;color:#1a1a1a;transform:scaleX(0.9);">5512</div>
<div class="t" style="left:42.96px;top:172.97px;font-size:7px;color:#1a1a1a;transform:scaleX(0.9);">SOH</div>
<div class="t" style="left:79.22px;top:172.97px;font-size:7px;color:#1a1a1a;transform:scaleX(0.9);">SOH</div>
<div class="t" style="left:115.48px;top:172.97px;font-size:7px;color:#1a1a1a;transform:scaleX(0.9);">MM-878:1</div>
<div class="tr" style="left:85.1px;top:172.97px;width:100px;font-size:7px;color:#1a1a1a;"><span style="transform:scaleX(0.9)">3080</span></div>
<div class="t" style="left:188px;top:172.97px;font-size:7px;color:#1a1a1a;transform:scaleX(0.9);">GPZ802</div>
<div class="t" style="left:224.26px;top:172.97px;font-size:7px;color:#1a1a1a;transform:scaleX(0.9);">Stopped</div>
<div class="t" style="left:260.52px;top:172.97px;font-size:7px;color:#1a1a1a;transform:scaleX(0.9);">2016-04-...</div>
<div class="t" style="left:296.78px;top:172.97px;font-size:7px;color:#1a1a1a;transform:scaleX(0.9);">2016-04-...</div>
<div class="t" style="left:333.04px;top:172.97px;font-size:7px;color:#1a1a1a;transform:scaleX(0.9);">YV1PSA...</div>
<div class="t" style="left:369.3px;top:172.97px;font-size:7px;color:#1a1a1a;transform:scaleX(0.9);">XRVP1046</div>
<div class="t" style="left:405.56px;top:172.97px;font-size:7px;color:#1a1a1a;transform:scaleX(0.9);">V541</div>
<div class="t" style="left:441.82px;top:172.97px;font-size:7px;color:#1a1a1a;transform:scaleX(0.9);">9681 7783</div>
<div class="t" style="left:514.34px;top:172.97px;font-size:7px;color:#1a1a1a;transform:scaleX(0.9);">VP11</div>
<div class="t" style="left:586.86px;top:172.97px;font-size:7px;color:#1a1a1a;transform:scaleX(0.9);">MM-878:1</div>
<div class="t" style="left:731.9px;top:172.97px;font-size:7px;color:#1a1a1a;transform:scaleX(0.9);">2015-05-19</div>
<div class="t" style="left:6.7px;top:185.62px;font-size:7px;color:#1a1a1a;transform:scaleX(0.9);">5512</div>
<div class="t" style="left:42.96px;top:185.62px;font-size:7px;color:#1a1a1a;transform:scaleX(0.9);">SOH</div>
<div class="t" style="left:79.22px;top:185.62px;font-size:7px;color:#1a1a1a;transform:scaleX(0.9);">SOH</div>
<div class="t" style="left:115.48px;top:185.62px;font-size:7px;color:#1a1a1a;transform:scaleX(0.9);">MM-1109:1</div>
<div class="tr" style="left:85.1px;top:185.62px;width:100px;font-size:7px;color:#1a1a1a;"><span style="transform:scaleX(0.9)">47</span></div>
<div class="t" style="left:188px;top:185.62px;font-size:7px;color:#1a1a1a;transform:scaleX(0.9);">LTN393</div>
<div class="t" style="left:224.26px;top:185.62px;font-size:7px;color:#1a1a1a;transform:scaleX(0.9);">Stopped</div>
<div class="t" style="left:260.52px;top:185.62px;font-size:7px;color:#1a1a1a;transform:scaleX(0.9);">2016-08-...</div>
<div class="t" style="left:296.78px;top:185.62px;font-size:7px;color:#1a1a1a;transform:scaleX(0.9);">2016-07-...</div>
<div class="t" style="left:333.04px;top:185.62px;font-size:7px;color:#1a1a1a;transform:scaleX(0.9);">YV1102P...</div>
<div class="t" style="left:369.3px;top:185.62px;font-size:7px;color:#1a1a1a;transform:scaleX(0.9);">XRVP1103</div>
<div class="t" style="left:405.56px;top:185.62px;font-size:7px;color:#1a1a1a;transform:scaleX(0.9);">V541</div>
<div class="t" style="left:441.82px;top:185.62px;font-size:7px;color:#1a1a1a;transform:scaleX(0.9);">9681 7800</div>
<div class="t" style="left:514.34px;top:185.62px;font-size:7px;color:#1a1a1a;transform:scaleX(0.9);">VP11</div>
<div class="t" style="left:586.86px;top:185.62px;font-size:7px;color:#1a1a1a;transform:scaleX(0.9);">MM-1109:1</div>
<div class="t" style="left:731.9px;top:185.62px;font-size:7px;color:#1a1a1a;transform:scaleX(0.9);">2015-05-19</div>
<div class="t" style="left:6.7px;top:198.27px;font-size:7px;color:#1a1a1a;transform:scaleX(0.9);">5512</div>
<div class="t" style="left:42.96px;top:198.27px;font-size:7px;color:#1a1a1a;transform:scaleX(0.9);">SOH</div>
<div class="t" style="left:79.22px;top:198.27px;font-size:7px;color:#1a1a1a;transform:scaleX(0.9);">SOH</div>
<div class="t" style="left:115.48px;top:198.27px;font-size:7px;color:#1a1a1a;transform:scaleX(0.9);">MM-645:1</div>
<div class="tr" style="left:85.1px;top:198.27px;width:100px;font-size:7px;color:#1a1a1a;"><span style="transform:scaleX(0.9)">1495</span></div>
<div class="t" style="left:188px;top:198.27px;font-size:7px;color:#1a1a1a;transform:scaleX(0.9);">JSP417</div>
<div class="t" style="left:224.26px;top:198.27px;font-size:7px;color:#1a1a1a;transform:scaleX(0.9);">Stopped</div>
<div class="t" style="left:260.52px;top:198.27px;font-size:7px;color:#1a1a1a;transform:scaleX(0.9);">2016-06-...</div>
<div class="t" style="left:296.78px;top:198.27px;font-size:7px;color:#1a1a1a;transform:scaleX(0.9);">2016-06-...</div>
<div class="t" style="left:333.04px;top:198.27px;font-size:7px;color:#1a1a1a;transform:scaleX(0.9);">YV1PS6...</div>
<div class="t" style="left:369.3px;top:198.27px;font-size:7px;color:#1a1a1a;transform:scaleX(0.9);">XRVP1126</div>
<div class="t" style="left:405.56px;top:198.27px;font-size:7px;color:#1a1a1a;transform:scaleX(0.9);">V541</div>
<div class="t" style="left:441.82px;top:198.27px;font-size:7px;color:#1a1a1a;transform:scaleX(0.9);">9681 7811</div>
<div class="t" style="left:514.34px;top:198.27px;font-size:7px;color:#1a1a1a;transform:scaleX(0.9);">VP11</div>
<div class="t" style="left:586.86px;top:198.27px;font-size:7px;color:#1a1a1a;transform:scaleX(0.9);">MM-645:1</div>
<div class="t" style="left:731.9px;top:198.27px;font-size:7px;color:#1a1a1a;transform:scaleX(0.9);">2015-05-19</div>
<div class="t" style="left:7.3px;top:210.92px;font-size:7px;color:#101a10;transform:scaleX(0.9);">5512</div>
<div class="t" style="left:43.56px;top:210.92px;font-size:7px;color:#101a10;transform:scaleX(0.9);">SOH</div>
<div class="t" style="left:79.82px;top:210.92px;font-size:7px;color:#101a10;transform:scaleX(0.9);">SOH</div>
<div class="t" style="left:116.08px;top:210.92px;font-size:7px;color:#101a10;transform:scaleX(0.9);">MM-1240:1</div>
<div class="tr" style="left:85.7px;top:210.92px;width:100px;font-size:7px;color:#101a10;"><span style="transform:scaleX(0.9)">1711</span></div>
<div class="t" style="left:188.6px;top:210.92px;font-size:7px;color:#101a10;transform:scaleX(0.9);">SFC645</div>
<div class="t" style="left:224.86px;top:210.92px;font-size:7px;color:#101a10;transform:scaleX(0.9);">Running</div>
<div class="t" style="left:261.12px;top:210.92px;font-size:7px;color:#101a10;transform:scaleX(0.9);">2016-08-...</div>
<div class="t" style="left:297.38px;top:210.92px;font-size:7px;color:#101a10;transform:scaleX(0.9);">2016-08-...</div>
<div class="t" style="left:333.64px;top:210.92px;font-size:7px;color:#101a10;transform:scaleX(0.9);">YV1A22...</div>
<div class="t" style="left:369.9px;top:210.92px;font-size:7px;color:#101a10;transform:scaleX(0.9);">XRVP1041</div>
<div class="t" style="left:406.16px;top:210.92px;font-size:7px;color:#101a10;transform:scaleX(0.9);">V541</div>
<div class="t" style="left:442.42px;top:210.92px;font-size:7px;color:#101a10;transform:scaleX(0.9);">9681 7780</div>
<div class="t" style="left:514.94px;top:210.92px;font-size:7px;color:#101a10;transform:scaleX(0.9);">VP11</div>
<div class="t" style="left:587.46px;top:210.92px;font-size:7px;color:#101a10;transform:scaleX(0.9);">MM-1240:1</div>
<div class="t" style="left:732.5px;top:210.92px;font-size:7px;color:#101a10;transform:scaleX(0.9);">2015-05-19</div>
<div class="t" style="left:6.7px;top:223.57px;font-size:7px;color:#1a1a1a;transform:scaleX(0.9);">5512</div>
<div class="t" style="left:42.96px;top:223.57px;font-size:7px;color:#1a1a1a;transform:scaleX(0.9);">SOH</div>
<div class="t" style="left:79.22px;top:223.57px;font-size:7px;color:#1a1a1a;transform:scaleX(0.9);">SOH</div>
<div class="t" style="left:115.48px;top:223.57px;font-size:7px;color:#1a1a1a;transform:scaleX(0.9);">MM-1106:1</div>
<div class="tr" style="left:85.1px;top:223.57px;width:100px;font-size:7px;color:#1a1a1a;"><span style="transform:scaleX(0.9)">9</span></div>
<div class="t" style="left:188px;top:223.57px;font-size:7px;color:#1a1a1a;transform:scaleX(0.9);">TCH335</div>
<div class="t" style="left:224.26px;top:223.57px;font-size:7px;color:#1a1a1a;transform:scaleX(0.9);">Stopped</div>
<div class="t" style="left:260.52px;top:223.57px;font-size:7px;color:#1a1a1a;transform:scaleX(0.9);">2016-07-...</div>
<div class="t" style="left:296.78px;top:223.57px;font-size:7px;color:#1a1a1a;transform:scaleX(0.9);">2015-08-...</div>
<div class="t" style="left:333.04px;top:223.57px;font-size:7px;color:#1a1a1a;transform:scaleX(0.9);">YV1LCA...</div>
<div class="t" style="left:369.3px;top:223.57px;font-size:7px;color:#1a1a1a;transform:scaleX(0.9);">XRVP1230</div>
<div class="t" style="left:405.56px;top:223.57px;font-size:7px;color:#1a1a1a;transform:scaleX(0.9);">V541</div>
<div class="t" style="left:441.82px;top:223.57px;font-size:7px;color:#1a1a1a;transform:scaleX(0.9);">9681-5942</div>
<div class="t" style="left:478.08px;top:223.57px;font-size:7px;color:#1a1a1a;transform:scaleX(0.9);">Ombygg...</div>
<div class="t" style="left:514.34px;top:223.57px;font-size:7px;color:#1a1a1a;transform:scaleX(0.9);">VP11</div>
<div class="t" style="left:586.86px;top:223.57px;font-size:7px;color:#1a1a1a;transform:scaleX(0.9);">MM-1106:1</div>
<div class="t" style="left:731.9px;top:223.57px;font-size:7px;color:#1a1a1a;transform:scaleX(0.9);">2015-05-19</div>
<div class="t" style="left:7.3px;top:236.22px;font-size:7px;color:#1a1a1a;transform:scaleX(0.9);">5512</div>
<div class="t" style="left:43.56px;top:236.22px;font-size:7px;color:#1a1a1a;transform:scaleX(0.9);">SOH</div>
<div class="t" style="left:79.82px;top:236.22px;font-size:7px;color:#1a1a1a;transform:scaleX(0.9);">SOH</div>
<div class="t" style="left:116.08px;top:236.22px;font-size:7px;color:#1a1a1a;transform:scaleX(0.9);">MM-1488:1</div>
<div class="tr" style="left:85.7px;top:236.22px;width:100px;font-size:7px;color:#1a1a1a;"><span style="transform:scaleX(0.9)">3426</span></div>
<div class="t" style="left:188.6px;top:236.22px;font-size:7px;color:#1a1a1a;transform:scaleX(0.9);">MSG821</div>
<div class="t" style="left:224.86px;top:236.22px;font-size:7px;color:#1a1a1a;transform:scaleX(0.9);">Running</div>
<div class="t" style="left:261.12px;top:236.22px;font-size:7px;color:#1a1a1a;transform:scaleX(0.9);">2016-08-...</div>
<div class="t" style="left:297.38px;top:236.22px;font-size:7px;color:#1a1a1a;transform:scaleX(0.9);">2016-08-...</div>
<div class="t" style="left:333.64px;top:236.22px;font-size:7px;color:#1a1a1a;transform:scaleX(0.9);">YV1PS6...</div>
<div class="t" style="left:369.9px;top:236.22px;font-size:7px;color:#1a1a1a;transform:scaleX(0.9);">XRVP1012</div>
<div class="t" style="left:406.16px;top:236.22px;font-size:7px;color:#1a1a1a;transform:scaleX(0.9);">V541</div>
<div class="t" style="left:442.42px;top:236.22px;font-size:7px;color:#1a1a1a;transform:scaleX(0.9);">9681 7766</div>
<div class="t" style="left:514.94px;top:236.22px;font-size:7px;color:#1a1a1a;transform:scaleX(0.9);">VP11</div>
<div class="t" style="left:587.46px;top:236.22px;font-size:7px;color:#1a1a1a;transform:scaleX(0.9);">MM-1488:1</div>
<div class="t" style="left:732.5px;top:236.22px;font-size:7px;color:#1a1a1a;transform:scaleX(0.9);">2015-05-19</div>
<div class="t" style="left:7.3px;top:248.87px;font-size:7px;color:#101a10;transform:scaleX(0.9);">5512</div>
<div class="t" style="left:43.56px;top:248.87px;font-size:7px;color:#101a10;transform:scaleX(0.9);">SOH</div>
<div class="t" style="left:79.82px;top:248.87px;font-size:7px;color:#101a10;transform:scaleX(0.9);">SOH</div>
<div class="t" style="left:116.08px;top:248.87px;font-size:7px;color:#101a10;transform:scaleX(0.9);">MM-1101:1</div>
<div class="tr" style="left:85.7px;top:248.87px;width:100px;font-size:7px;color:#101a10;"><span style="transform:scaleX(0.9)">2095</span></div>
<div class="t" style="left:188.6px;top:248.87px;font-size:7px;color:#101a10;transform:scaleX(0.9);">GPW838</div>
<div class="t" style="left:224.86px;top:248.87px;font-size:7px;color:#101a10;transform:scaleX(0.9);">Running</div>
<div class="t" style="left:261.12px;top:248.87px;font-size:7px;color:#101a10;transform:scaleX(0.9);">2016-08-...</div>
<div class="t" style="left:297.38px;top:248.87px;font-size:7px;color:#101a10;transform:scaleX(0.9);">2016-08-...</div>
<div class="t" style="left:333.64px;top:248.87px;font-size:7px;color:#101a10;transform:scaleX(0.9);">YV1PSA...</div>
<div class="t" style="left:369.9px;top:248.87px;font-size:7px;color:#101a10;transform:scaleX(0.9);">XRVP1123</div>
<div class="t" style="left:406.16px;top:248.87px;font-size:7px;color:#101a10;transform:scaleX(0.9);">V541</div>
<div class="t" style="left:442.42px;top:248.87px;font-size:7px;color:#101a10;transform:scaleX(0.9);">9681 7809</div>
<div class="t" style="left:514.94px;top:248.87px;font-size:7px;color:#101a10;transform:scaleX(0.9);">VP11</div>
<div class="t" style="left:587.46px;top:248.87px;font-size:7px;color:#101a10;transform:scaleX(0.9);">MM-1101:1</div>
<div class="t" style="left:732.5px;top:248.87px;font-size:7px;color:#101a10;transform:scaleX(0.9);">2015-05-19</div>
<div class="t" style="left:6.7px;top:261.52px;font-size:7px;color:#1a1a1a;transform:scaleX(0.9);">5512</div>
<div class="t" style="left:42.96px;top:261.52px;font-size:7px;color:#1a1a1a;transform:scaleX(0.9);">SOH</div>
<div class="t" style="left:79.22px;top:261.52px;font-size:7px;color:#1a1a1a;transform:scaleX(0.9);">SOH</div>
<div class="t" style="left:115.48px;top:261.52px;font-size:7px;color:#1a1a1a;transform:scaleX(0.9);">00-09-D...</div>
<div class="tr" style="left:85.1px;top:261.52px;width:100px;font-size:7px;color:#1a1a1a;"><span style="transform:scaleX(0.9)">4300</span></div>
<div class="t" style="left:188px;top:261.52px;font-size:7px;color:#1a1a1a;transform:scaleX(0.9);">FRZ314</div>
<div class="t" style="left:224.26px;top:261.52px;font-size:7px;color:#1a1a1a;transform:scaleX(0.9);">Stop pen...</div>
<div class="t" style="left:260.52px;top:261.52px;font-size:7px;color:#1a1a1a;transform:scaleX(0.9);">2015-12-...</div>
<div class="t" style="left:296.78px;top:261.52px;font-size:7px;color:#1a1a1a;transform:scaleX(0.9);">2015-12-...</div>
<div class="t" style="left:333.04px;top:261.52px;font-size:7px;color:#1a1a1a;transform:scaleX(0.9);">YV1PSA...</div>
<div class="t" style="left:369.3px;top:261.52px;font-size:7px;color:#1a1a1a;transform:scaleX(0.9);">XRVP1003</div>
<div class="t" style="left:405.56px;top:261.52px;font-size:7px;color:#1a1a1a;transform:scaleX(0.9);">V541</div>
<div class="t" style="left:441.82px;top:261.52px;font-size:7px;color:#1a1a1a;transform:scaleX(0.9);">9681 7761</div>
<div class="t" style="left:514.34px;top:261.52px;font-size:7px;color:#1a1a1a;transform:scaleX(0.9);">VP11</div>
<div class="t" style="left:586.86px;top:261.52px;font-size:7px;color:#1a1a1a;transform:scaleX(0.9);">MM-2262:1</div>
<div class="t" style="left:731.9px;top:261.52px;font-size:7px;color:#1a1a1a;transform:scaleX(0.9);">2015-05-19</div>
<div class="t" style="left:6.7px;top:274.17px;font-size:7px;color:#1a1a1a;transform:scaleX(0.9);">5512</div>
<div class="t" style="left:42.96px;top:274.17px;font-size:7px;color:#1a1a1a;transform:scaleX(0.9);">SOH</div>
<div class="t" style="left:79.22px;top:274.17px;font-size:7px;color:#1a1a1a;transform:scaleX(0.9);">SOH</div>
<div class="t" style="left:115.48px;top:274.17px;font-size:7px;color:#1a1a1a;transform:scaleX(0.9);">00-09-D...</div>
<div class="tr" style="left:85.1px;top:274.17px;width:100px;font-size:7px;color:#1a1a1a;"><span style="transform:scaleX(0.9)">27</span></div>
<div class="t" style="left:224.26px;top:274.17px;font-size:7px;color:#1a1a1a;transform:scaleX(0.9);">Stop pen...</div>
<div class="t" style="left:260.52px;top:274.17px;font-size:7px;color:#1a1a1a;transform:scaleX(0.9);">2016-05-...</div>
<div class="t" style="left:296.78px;top:274.17px;font-size:7px;color:#1a1a1a;transform:scaleX(0.9);">2016-05-...</div>
<div class="t" style="left:333.04px;top:274.17px;font-size:7px;color:#1a1a1a;transform:scaleX(0.9);">YV1A22...</div>
<div class="t" style="left:369.3px;top:274.17px;font-size:7px;color:#1a1a1a;transform:scaleX(0.9);">XRVP1061</div>
<div class="t" style="left:405.56px;top:274.17px;font-size:7px;color:#1a1a1a;transform:scaleX(0.9);">V541</div>
<div class="t" style="left:441.82px;top:274.17px;font-size:7px;color:#1a1a1a;transform:scaleX(0.9);">9681 7788</div>
<div class="t" style="left:514.34px;top:274.17px;font-size:7px;color:#1a1a1a;transform:scaleX(0.9);">VP11</div>
<div class="t" style="left:586.86px;top:274.17px;font-size:7px;color:#1a1a1a;transform:scaleX(0.9);">MM-2261:1</div>
<div class="t" style="left:731.9px;top:274.17px;font-size:7px;color:#1a1a1a;transform:scaleX(0.9);">2015-05-19</div>
<div class="t" style="left:7.3px;top:286.82px;font-size:7px;color:#101a10;transform:scaleX(0.9);">5512</div>
<div class="t" style="left:43.56px;top:286.82px;font-size:7px;color:#101a10;transform:scaleX(0.9);">SOH</div>
<div class="t" style="left:79.82px;top:286.82px;font-size:7px;color:#101a10;transform:scaleX(0.9);">SOH</div>
<div class="t" style="left:116.08px;top:286.82px;font-size:7px;color:#101a10;transform:scaleX(0.9);">MM-1184:1</div>
<div class="tr" style="left:85.7px;top:286.82px;width:100px;font-size:7px;color:#101a10;"><span style="transform:scaleX(0.9)">5441</span></div>
<div class="t" style="left:188.6px;top:286.82px;font-size:7px;color:#101a10;transform:scaleX(0.9);">FRJ528</div>
<div class="t" style="left:224.86px;top:286.82px;font-size:7px;color:#101a10;transform:scaleX(0.9);">Running</div>
<div class="t" style="left:261.12px;top:286.82px;font-size:7px;color:#101a10;transform:scaleX(0.9);">2016-09-...</div>
<div class="t" style="left:297.38px;top:286.82px;font-size:7px;color:#101a10;transform:scaleX(0.9);">2016-09-...</div>
<div class="t" style="left:333.64px;top:286.82px;font-size:7px;color:#101a10;transform:scaleX(0.9);">YV1PS1...</div>
<div class="t" style="left:369.9px;top:286.82px;font-size:7px;color:#101a10;transform:scaleX(0.9);">XRVP1001</div>
<div class="t" style="left:406.16px;top:286.82px;font-size:7px;color:#101a10;transform:scaleX(0.9);">V541</div>
<div class="t" style="left:442.42px;top:286.82px;font-size:7px;color:#101a10;transform:scaleX(0.9);">9681 7759</div>
<div class="t" style="left:514.94px;top:286.82px;font-size:7px;color:#101a10;transform:scaleX(0.9);">VP11</div>
<div class="t" style="left:587.46px;top:286.82px;font-size:7px;color:#101a10;transform:scaleX(0.9);">MM-1184:1</div>
<div class="t" style="left:732.5px;top:286.82px;font-size:7px;color:#101a10;transform:scaleX(0.9);">2015-05-19</div>
<div class="t" style="left:7.3px;top:299.47px;font-size:7px;color:#101a10;transform:scaleX(0.9);">5512</div>
<div class="t" style="left:43.56px;top:299.47px;font-size:7px;color:#101a10;transform:scaleX(0.9);">SOH</div>
<div class="t" style="left:79.82px;top:299.47px;font-size:7px;color:#101a10;transform:scaleX(0.9);">SOH</div>
<div class="t" style="left:116.08px;top:299.47px;font-size:7px;color:#101a10;transform:scaleX(0.9);">00-09-D...</div>
<div class="tr" style="left:85.7px;top:299.47px;width:100px;font-size:7px;color:#101a10;"><span style="transform:scaleX(0.9)">4449</span></div>
<div class="t" style="left:188.6px;top:299.47px;font-size:7px;color:#101a10;transform:scaleX(0.9);">JSR634</div>
<div class="t" style="left:224.86px;top:299.47px;font-size:7px;color:#101a10;transform:scaleX(0.9);">Running</div>
<div class="t" style="left:261.12px;top:299.47px;font-size:7px;color:#101a10;transform:scaleX(0.9);">2016-09-...</div>
<div class="t" style="left:297.38px;top:299.47px;font-size:7px;color:#101a10;transform:scaleX(0.9);">2016-09-...</div>
<div class="t" style="left:333.64px;top:299.47px;font-size:7px;color:#101a10;transform:scaleX(0.9);">YV1PS6...</div>
<div class="t" style="left:369.9px;top:299.47px;font-size:7px;color:#101a10;transform:scaleX(0.9);">XRVP1018</div>
<div class="t" style="left:406.16px;top:299.47px;font-size:7px;color:#101a10;transform:scaleX(0.9);">V541</div>
<div class="t" style="left:442.42px;top:299.47px;font-size:7px;color:#101a10;transform:scaleX(0.9);">9681 7769</div>
<div class="t" style="left:514.94px;top:299.47px;font-size:7px;color:#101a10;transform:scaleX(0.9);">VP11</div>
<div class="t" style="left:587.46px;top:299.47px;font-size:7px;color:#101a10;transform:scaleX(0.9);">MM-2264:1</div>
<div class="t" style="left:732.5px;top:299.47px;font-size:7px;color:#101a10;transform:scaleX(0.9);">2015-05-19</div>
<div class="t" style="left:7.3px;top:312.12px;font-size:7px;color:#101a10;transform:scaleX(0.9);">5512</div>
<div class="t" style="left:43.56px;top:312.12px;font-size:7px;color:#101a10;transform:scaleX(0.9);">SOH</div>
<div class="t" style="left:79.82px;top:312.12px;font-size:7px;color:#101a10;transform:scaleX(0.9);">SOH</div>
<div class="t" style="left:116.08px;top:312.12px;font-size:7px;color:#101a10;transform:scaleX(0.9);">00-09-D...</div>
<div class="tr" style="left:85.7px;top:312.12px;width:100px;font-size:7px;color:#101a10;"><span style="transform:scaleX(0.9)">4630</span></div>
<div class="t" style="left:188.6px;top:312.12px;font-size:7px;color:#101a10;transform:scaleX(0.9);">CES899</div>
<div class="t" style="left:224.86px;top:312.12px;font-size:7px;color:#101a10;transform:scaleX(0.9);">Running</div>
<div class="t" style="left:261.12px;top:312.12px;font-size:7px;color:#101a10;transform:scaleX(0.9);">2016-09-...</div>
<div class="t" style="left:297.38px;top:312.12px;font-size:7px;color:#101a10;transform:scaleX(0.9);">2016-09-...</div>
<div class="t" style="left:333.64px;top:312.12px;font-size:7px;color:#101a10;transform:scaleX(0.9);">YV1PS1...</div>
<div class="t" style="left:369.9px;top:312.12px;font-size:7px;color:#101a10;transform:scaleX(0.9);">XRVP1004</div>
<div class="t" style="left:406.16px;top:312.12px;font-size:7px;color:#101a10;transform:scaleX(0.9);">V541</div>
<div class="t" style="left:442.42px;top:312.12px;font-size:7px;color:#101a10;transform:scaleX(0.9);">9681 7762</div>
<div class="t" style="left:514.94px;top:312.12px;font-size:7px;color:#101a10;transform:scaleX(0.9);">VP11</div>
<div class="t" style="left:587.46px;top:312.12px;font-size:7px;color:#101a10;transform:scaleX(0.9);">MM-2263:1</div>
<div class="t" style="left:732.5px;top:312.12px;font-size:7px;color:#101a10;transform:scaleX(0.9);">2015-05-19</div>
<div class="t" style="left:6.7px;top:324.77px;font-size:7px;color:#1a1a1a;transform:scaleX(0.9);">5512</div>
<div class="t" style="left:42.96px;top:324.77px;font-size:7px;color:#1a1a1a;transform:scaleX(0.9);">SOH</div>
<div class="t" style="left:79.22px;top:324.77px;font-size:7px;color:#1a1a1a;transform:scaleX(0.9);">SOH</div>
<div class="t" style="left:115.48px;top:324.77px;font-size:7px;color:#1a1a1a;transform:scaleX(0.9);">00-09-D...</div>
<div class="tr" style="left:85.1px;top:324.77px;width:100px;font-size:7px;color:#1a1a1a;"><span style="transform:scaleX(0.9)">1923</span></div>
<div class="t" style="left:188px;top:324.77px;font-size:7px;color:#1a1a1a;transform:scaleX(0.9);">DEU099</div>
<div class="t" style="left:224.26px;top:324.77px;font-size:7px;color:#1a1a1a;transform:scaleX(0.9);">Stopped</div>
<div class="t" style="left:260.52px;top:324.77px;font-size:7px;color:#1a1a1a;transform:scaleX(0.9);">2016-08-...</div>
<div class="t" style="left:296.78px;top:324.77px;font-size:7px;color:#1a1a1a;transform:scaleX(0.9);">2016-08-...</div>
<div class="t" style="left:333.04px;top:324.77px;font-size:7px;color:#1a1a1a;transform:scaleX(0.9);">YV1PSA...</div>
<div class="t" style="left:369.3px;top:324.77px;font-size:7px;color:#1a1a1a;transform:scaleX(0.9);">XRVP1118</div>
<div class="t" style="left:405.56px;top:324.77px;font-size:7px;color:#1a1a1a;transform:scaleX(0.9);">V541</div>
<div class="t" style="left:441.82px;top:324.77px;font-size:7px;color:#1a1a1a;transform:scaleX(0.9);">9681 7806</div>
<div class="t" style="left:514.34px;top:324.77px;font-size:7px;color:#1a1a1a;transform:scaleX(0.9);">VP11</div>
<div class="t" style="left:586.86px;top:324.77px;font-size:7px;color:#1a1a1a;transform:scaleX(0.9);">MM-2265:1</div>
<div class="t" style="left:731.9px;top:324.77px;font-size:7px;color:#1a1a1a;transform:scaleX(0.9);">2015-05-19</div>
<div class="t" style="left:6.7px;top:337.42px;font-size:7px;color:#1a1a1a;transform:scaleX(0.9);">5512</div>
<div class="t" style="left:42.96px;top:337.42px;font-size:7px;color:#1a1a1a;transform:scaleX(0.9);">SOH</div>
<div class="t" style="left:79.22px;top:337.42px;font-size:7px;color:#1a1a1a;transform:scaleX(0.9);">SOH</div>
<div class="t" style="left:115.48px;top:337.42px;font-size:7px;color:#1a1a1a;transform:scaleX(0.9);">00-09-D...</div>
<div class="tr" style="left:85.1px;top:337.42px;width:100px;font-size:7px;color:#1a1a1a;"><span style="transform:scaleX(0.9)">5</span></div>
<div class="t" style="left:224.26px;top:337.42px;font-size:7px;color:#1a1a1a;transform:scaleX(0.9);">Stopped</div>
<div class="t" style="left:260.52px;top:337.42px;font-size:7px;color:#1a1a1a;transform:scaleX(0.9);">2016-05-...</div>
<div class="t" style="left:296.78px;top:337.42px;font-size:7px;color:#1a1a1a;transform:scaleX(0.9);">2015-08-...</div>
<div class="t" style="left:333.04px;top:337.42px;font-size:7px;color:#1a1a1a;transform:scaleX(0.9);">YV1PSA...</div>
<div class="t" style="left:369.3px;top:337.42px;font-size:7px;color:#1a1a1a;transform:scaleX(0.9);">XRVP1063</div>
<div class="t" style="left:405.56px;top:337.42px;font-size:7px;color:#1a1a1a;transform:scaleX(0.9);">V541</div>
<div class="t" style="left:441.82px;top:337.42px;font-size:7px;color:#1a1a1a;transform:scaleX(0.9);">9681 7790</div>
<div class="t" style="left:514.34px;top:337.42px;font-size:7px;color:#1a1a1a;transform:scaleX(0.9);">VP11</div>
<div class="t" style="left:586.86px;top:337.42px;font-size:7px;color:#1a1a1a;transform:scaleX(0.9);">MM-2267:1</div>
<div class="t" style="left:731.9px;top:337.42px;font-size:7px;color:#1a1a1a;transform:scaleX(0.9);">2015-05-19</div>
<div class="t" style="left:7.3px;top:350.07px;font-size:7px;color:#101a10;transform:scaleX(0.9);">5512</div>
<div class="t" style="left:43.56px;top:350.07px;font-size:7px;color:#101a10;transform:scaleX(0.9);">SOH</div>
<div class="t" style="left:79.82px;top:350.07px;font-size:7px;color:#101a10;transform:scaleX(0.9);">SOH</div>
<div class="t" style="left:116.08px;top:350.07px;font-size:7px;color:#101a10;transform:scaleX(0.9);">00-09-D...</div>
<div class="tr" style="left:85.7px;top:350.07px;width:100px;font-size:7px;color:#101a10;"><span style="transform:scaleX(0.9)">10</span></div>
<div class="t" style="left:188.6px;top:350.07px;font-size:7px;color:#101a10;transform:scaleX(0.9);">KLR813</div>
<div class="t" style="left:224.86px;top:350.07px;font-size:7px;color:#101a10;transform:scaleX(0.9);">Running</div>
<div class="t" style="left:261.12px;top:350.07px;font-size:7px;color:#101a10;transform:scaleX(0.9);">2015-06-...</div>
<div class="t" style="left:297.38px;top:350.07px;font-size:7px;color:#101a10;transform:scaleX(0.9);">2015-06-...</div>
<div class="t" style="left:333.64px;top:350.07px;font-size:7px;color:#101a10;transform:scaleX(0.9);">YV1PS1...</div>
<div class="t" style="left:369.9px;top:350.07px;font-size:7px;color:#101a10;transform:scaleX(0.9);">XRVP1028</div>
<div class="t" style="left:406.16px;top:350.07px;font-size:7px;color:#101a10;transform:scaleX(0.9);">V541</div>
<div class="t" style="left:442.42px;top:350.07px;font-size:7px;color:#101a10;transform:scaleX(0.9);">9681 7776</div>
<div class="t" style="left:514.94px;top:350.07px;font-size:7px;color:#101a10;transform:scaleX(0.9);">VP11</div>
<div class="t" style="left:587.46px;top:350.07px;font-size:7px;color:#101a10;transform:scaleX(0.9);">MM-2269:1</div>
<div class="t" style="left:732.5px;top:350.07px;font-size:7px;color:#101a10;transform:scaleX(0.9);">2015-05-19</div>
<div class="t" style="left:7.3px;top:362.72px;font-size:7px;color:#101a10;transform:scaleX(0.9);">5512</div>
<div class="t" style="left:43.56px;top:362.72px;font-size:7px;color:#101a10;transform:scaleX(0.9);">SOH</div>
<div class="t" style="left:79.82px;top:362.72px;font-size:7px;color:#101a10;transform:scaleX(0.9);">SOH</div>
<div class="t" style="left:116.08px;top:362.72px;font-size:7px;color:#101a10;transform:scaleX(0.9);">00-09-D...</div>
<div class="tr" style="left:85.7px;top:362.72px;width:100px;font-size:7px;color:#101a10;"><span style="transform:scaleX(0.9)">1100</span></div>
<div class="t" style="left:188.6px;top:362.72px;font-size:7px;color:#101a10;transform:scaleX(0.9);">MNT426</div>
<div class="t" style="left:224.86px;top:362.72px;font-size:7px;color:#101a10;transform:scaleX(0.9);">Running</div>
<div class="t" style="left:261.12px;top:362.72px;font-size:7px;color:#101a10;transform:scaleX(0.9);">2015-12-...</div>
<div class="t" style="left:297.38px;top:362.72px;font-size:7px;color:#101a10;transform:scaleX(0.9);">2015-12-...</div>
<div class="t" style="left:333.64px;top:362.72px;font-size:7px;color:#101a10;transform:scaleX(0.9);">YV1PS1...</div>
<div class="t" style="left:369.9px;top:362.72px;font-size:7px;color:#101a10;transform:scaleX(0.9);">XRVP1107</div>
<div class="t" style="left:406.16px;top:362.72px;font-size:7px;color:#101a10;transform:scaleX(0.9);">V541</div>
<div class="t" style="left:442.42px;top:362.72px;font-size:7px;color:#101a10;transform:scaleX(0.9);">9681 7802</div>
<div class="t" style="left:514.94px;top:362.72px;font-size:7px;color:#101a10;transform:scaleX(0.9);">VP11</div>
<div class="t" style="left:587.46px;top:362.72px;font-size:7px;color:#101a10;transform:scaleX(0.9);">MM-2266:1</div>
<div class="t" style="left:732.5px;top:362.72px;font-size:7px;color:#101a10;transform:scaleX(0.9);">2015-05-19</div>
<div class="t" style="left:7.3px;top:375.37px;font-size:7px;color:#101a10;transform:scaleX(0.9);">5512</div>
<div class="t" style="left:43.56px;top:375.37px;font-size:7px;color:#101a10;transform:scaleX(0.9);">SOH</div>
<div class="t" style="left:79.82px;top:375.37px;font-size:7px;color:#101a10;transform:scaleX(0.9);">SOH</div>
<div class="t" style="left:116.08px;top:375.37px;font-size:7px;color:#101a10;transform:scaleX(0.9);">00-09-D...</div>
<div class="tr" style="left:85.7px;top:375.37px;width:100px;font-size:7px;color:#101a10;"><span style="transform:scaleX(0.9)">4809</span></div>
<div class="t" style="left:188.6px;top:375.37px;font-size:7px;color:#101a10;transform:scaleX(0.9);">DYE480</div>
<div class="t" style="left:224.86px;top:375.37px;font-size:7px;color:#101a10;transform:scaleX(0.9);">Running</div>
<div class="t" style="left:261.12px;top:375.37px;font-size:7px;color:#101a10;transform:scaleX(0.9);">2016-09-...</div>
<div class="t" style="left:297.38px;top:375.37px;font-size:7px;color:#101a10;transform:scaleX(0.9);">2016-09-...</div>
<div class="t" style="left:333.64px;top:375.37px;font-size:7px;color:#101a10;transform:scaleX(0.9);">YV1PSA...</div>
<div class="t" style="left:369.9px;top:375.37px;font-size:7px;color:#101a10;transform:scaleX(0.9);">XRVP1019</div>
<div class="t" style="left:406.16px;top:375.37px;font-size:7px;color:#101a10;transform:scaleX(0.9);">V541</div>
<div class="t" style="left:442.42px;top:375.37px;font-size:7px;color:#101a10;transform:scaleX(0.9);">9681 7770</div>
<div class="t" style="left:514.94px;top:375.37px;font-size:7px;color:#101a10;transform:scaleX(0.9);">VP11</div>
<div class="t" style="left:587.46px;top:375.37px;font-size:7px;color:#101a10;transform:scaleX(0.9);">MM-2268:1</div>
<div class="t" style="left:732.5px;top:375.37px;font-size:7px;color:#101a10;transform:scaleX(0.9);">2015-05-19</div>
<div class="t" style="left:7.3px;top:388.02px;font-size:7px;color:#101a10;transform:scaleX(0.9);">5512</div>
<div class="t" style="left:43.56px;top:388.02px;font-size:7px;color:#101a10;transform:scaleX(0.9);">SOH</div>
<div class="t" style="left:79.82px;top:388.02px;font-size:7px;color:#101a10;transform:scaleX(0.9);">SOH</div>
<div class="t" style="left:116.08px;top:388.02px;font-size:7px;color:#101a10;transform:scaleX(0.9);">00-09-D...</div>
<div class="tr" style="left:85.7px;top:388.02px;width:100px;font-size:7px;color:#101a10;"><span style="transform:scaleX(0.9)">797</span></div>
<div class="t" style="left:188.6px;top:388.02px;font-size:7px;color:#101a10;transform:scaleX(0.9);">UZB794</div>
<div class="t" style="left:224.86px;top:388.02px;font-size:7px;color:#101a10;transform:scaleX(0.9);">Running</div>
<div class="t" style="left:261.12px;top:388.02px;font-size:7px;color:#101a10;transform:scaleX(0.9);">2016-06-...</div>
<div class="t" style="left:297.38px;top:388.02px;font-size:7px;color:#101a10;transform:scaleX(0.9);">2016-06-...</div>
<div class="t" style="left:333.64px;top:388.02px;font-size:7px;color:#101a10;transform:scaleX(0.9);">YV1PS1...</div>
<div class="t" style="left:369.9px;top:388.02px;font-size:7px;color:#101a10;transform:scaleX(0.9);">XRVP1042</div>
<div class="t" style="left:406.16px;top:388.02px;font-size:7px;color:#101a10;transform:scaleX(0.9);">V541</div>
<div class="t" style="left:442.42px;top:388.02px;font-size:7px;color:#101a10;transform:scaleX(0.9);">9681 7781</div>
<div class="t" style="left:514.94px;top:388.02px;font-size:7px;color:#101a10;transform:scaleX(0.9);">VP11</div>
<div class="t" style="left:587.46px;top:388.02px;font-size:7px;color:#101a10;transform:scaleX(0.9);">MM-2270:1</div>
<div class="t" style="left:732.5px;top:388.02px;font-size:7px;color:#101a10;transform:scaleX(0.9);">2015-05-19</div>
<div class="t" style="left:6.7px;top:400.67px;font-size:7px;color:#1a1a1a;transform:scaleX(0.9);">5512</div>
<div class="t" style="left:42.96px;top:400.67px;font-size:7px;color:#1a1a1a;transform:scaleX(0.9);">SOH</div>
<div class="t" style="left:79.22px;top:400.67px;font-size:7px;color:#1a1a1a;transform:scaleX(0.9);">SOH</div>
<div class="t" style="left:115.48px;top:400.67px;font-size:7px;color:#1a1a1a;transform:scaleX(0.9);">MM-787:1</div>
<div class="tr" style="left:85.1px;top:400.67px;width:100px;font-size:7px;color:#1a1a1a;"><span style="transform:scaleX(0.9)">2522</span></div>
<div class="t" style="left:188px;top:400.67px;font-size:7px;color:#1a1a1a;transform:scaleX(0.9);">FSH007</div>
<div class="t" style="left:224.26px;top:400.67px;font-size:7px;color:#1a1a1a;transform:scaleX(0.9);">Stopped</div>
<div class="t" style="left:260.52px;top:400.67px;font-size:7px;color:#1a1a1a;transform:scaleX(0.9);">2016-08-...</div>
<div class="t" style="left:296.78px;top:400.67px;font-size:7px;color:#1a1a1a;transform:scaleX(0.9);">2016-07-...</div>
<div class="t" style="left:333.04px;top:400.67px;font-size:7px;color:#1a1a1a;transform:scaleX(0.9);">YV1PS6...</div>
<div class="t" style="left:369.3px;top:400.67px;font-size:7px;color:#1a1a1a;transform:scaleX(0.9);">XRVP1035</div>
<div class="t" style="left:405.56px;top:400.67px;font-size:7px;color:#1a1a1a;transform:scaleX(0.9);">V541</div>
<div class="t" style="left:441.82px;top:400.67px;font-size:7px;color:#1a1a1a;transform:scaleX(0.9);">9681 7778</div>
<div class="t" style="left:514.34px;top:400.67px;font-size:7px;color:#1a1a1a;transform:scaleX(0.9);">VP11</div>
<div class="t" style="left:586.86px;top:400.67px;font-size:7px;color:#1a1a1a;transform:scaleX(0.9);">MM-787:1</div>
<div class="t" style="left:731.9px;top:400.67px;font-size:7px;color:#1a1a1a;transform:scaleX(0.9);">2015-05-19</div>
<div class="t" style="left:6.7px;top:413.32px;font-size:7px;color:#1a1a1a;transform:scaleX(0.9);">5512</div>
<div class="t" style="left:42.96px;top:413.32px;font-size:7px;color:#1a1a1a;transform:scaleX(0.9);">SOH</div>
<div class="t" style="left:79.22px;top:413.32px;font-size:7px;color:#1a1a1a;transform:scaleX(0.9);">SOH</div>
<div class="t" style="left:115.48px;top:413.32px;font-size:7px;color:#1a1a1a;transform:scaleX(0.9);">00-09-D...</div>
<div class="tr" style="left:85.1px;top:413.32px;width:100px;font-size:7px;color:#1a1a1a;"><span style="transform:scaleX(0.9)">1500</span></div>
<div class="t" style="left:188px;top:413.32px;font-size:7px;color:#1a1a1a;transform:scaleX(0.9);">FTF205</div>
<div class="t" style="left:224.26px;top:413.32px;font-size:7px;color:#1a1a1a;transform:scaleX(0.9);">Stopped</div>
<div class="t" style="left:260.52px;top:413.32px;font-size:7px;color:#1a1a1a;transform:scaleX(0.9);">2016-05-...</div>
<div class="t" style="left:296.78px;top:413.32px;font-size:7px;color:#1a1a1a;transform:scaleX(0.9);">2015-12-...</div>
<div class="t" style="left:333.04px;top:413.32px;font-size:7px;color:#1a1a1a;transform:scaleX(0.9);">YV1PSA...</div>
<div class="t" style="left:369.3px;top:413.32px;font-size:7px;color:#1a1a1a;transform:scaleX(0.9);">XRVP1005</div>
<div class="t" style="left:405.56px;top:413.32px;font-size:7px;color:#1a1a1a;transform:scaleX(0.9);">V541</div>
<div class="t" style="left:441.82px;top:413.32px;font-size:7px;color:#1a1a1a;transform:scaleX(0.9);">9681 7763</div>
<div class="t" style="left:514.34px;top:413.32px;font-size:7px;color:#1a1a1a;transform:scaleX(0.9);">VP11</div>
<div class="t" style="left:586.86px;top:413.32px;font-size:7px;color:#1a1a1a;transform:scaleX(0.9);">MM-2273:1</div>
<div class="t" style="left:731.9px;top:413.32px;font-size:7px;color:#1a1a1a;transform:scaleX(0.9);">2015-05-19</div>
<div class="t" style="left:7.3px;top:425.97px;font-size:7px;color:#101a10;transform:scaleX(0.9);">5512</div>
<div class="t" style="left:43.56px;top:425.97px;font-size:7px;color:#101a10;transform:scaleX(0.9);">SOH</div>
<div class="t" style="left:79.82px;top:425.97px;font-size:7px;color:#101a10;transform:scaleX(0.9);">SOH</div>
<div class="t" style="left:116.08px;top:425.97px;font-size:7px;color:#101a10;transform:scaleX(0.9);">MM-1097:1</div>
<div class="tr" style="left:85.7px;top:425.97px;width:100px;font-size:7px;color:#101a10;"><span style="transform:scaleX(0.9)">2699</span></div>
<div class="t" style="left:188.6px;top:425.97px;font-size:7px;color:#101a10;transform:scaleX(0.9);">FRJ530</div>
<div class="t" style="left:224.86px;top:425.97px;font-size:7px;color:#101a10;transform:scaleX(0.9);">Running</div>
<div class="t" style="left:261.12px;top:425.97px;font-size:7px;color:#101a10;transform:scaleX(0.9);">2016-09-...</div>
<div class="t" style="left:297.38px;top:425.97px;font-size:7px;color:#101a10;transform:scaleX(0.9);">2016-09-...</div>
<div class="t" style="left:333.64px;top:425.97px;font-size:7px;color:#101a10;transform:scaleX(0.9);">YV1PSA...</div>
<div class="t" style="left:369.9px;top:425.97px;font-size:7px;color:#101a10;transform:scaleX(0.9);">XRVP1016</div>
<div class="t" style="left:406.16px;top:425.97px;font-size:7px;color:#101a10;transform:scaleX(0.9);">V541</div>
<div class="t" style="left:442.42px;top:425.97px;font-size:7px;color:#101a10;transform:scaleX(0.9);">9681 7768</div>
<div class="t" style="left:514.94px;top:425.97px;font-size:7px;color:#101a10;transform:scaleX(0.9);">VP11</div>
<div class="t" style="left:587.46px;top:425.97px;font-size:7px;color:#101a10;transform:scaleX(0.9);">MM-1097:1</div>
<div class="t" style="left:732.5px;top:425.97px;font-size:7px;color:#101a10;transform:scaleX(0.9);">2015-05-19</div>
<div class="t" style="left:7.3px;top:438.62px;font-size:7px;color:#101a10;transform:scaleX(0.9);">5512</div>
<div class="t" style="left:43.56px;top:438.62px;font-size:7px;color:#101a10;transform:scaleX(0.9);">SOH</div>
<div class="t" style="left:79.82px;top:438.62px;font-size:7px;color:#101a10;transform:scaleX(0.9);">SOH</div>
<div class="t" style="left:116.08px;top:438.62px;font-size:7px;color:#101a10;transform:scaleX(0.9);">MM-797:1</div>
<div class="tr" style="left:85.7px;top:438.62px;width:100px;font-size:7px;color:#101a10;"><span style="transform:scaleX(0.9)">234</span></div>
<div class="t" style="left:188.6px;top:438.62px;font-size:7px;color:#101a10;transform:scaleX(0.9);">HSB212</div>
<div class="t" style="left:224.86px;top:438.62px;font-size:7px;color:#101a10;transform:scaleX(0.9);">Running</div>
<div class="t" style="left:261.12px;top:438.62px;font-size:7px;color:#101a10;transform:scaleX(0.9);">2015-11-...</div>
<div class="t" style="left:297.38px;top:438.62px;font-size:7px;color:#101a10;transform:scaleX(0.9);">2015-11-...</div>
<div class="t" style="left:333.64px;top:438.62px;font-size:7px;color:#101a10;transform:scaleX(0.9);">YV1PSA...</div>
<div class="t" style="left:369.9px;top:438.62px;font-size:7px;color:#101a10;transform:scaleX(0.9);">XRVP1043</div>
<div class="t" style="left:406.16px;top:438.62px;font-size:7px;color:#101a10;transform:scaleX(0.9);">V541</div>
<div class="t" style="left:442.42px;top:438.62px;font-size:7px;color:#101a10;transform:scaleX(0.9);">9681 7782</div>
<div class="t" style="left:514.94px;top:438.62px;font-size:7px;color:#101a10;transform:scaleX(0.9);">VP11</div>
<div class="t" style="left:587.46px;top:438.62px;font-size:7px;color:#101a10;transform:scaleX(0.9);">MM-797:1</div>
<div class="t" style="left:732.5px;top:438.62px;font-size:7px;color:#101a10;transform:scaleX(0.9);">2015-05-19</div>
<div class="t" style="left:7.3px;top:451.27px;font-size:7px;color:#101a10;transform:scaleX(0.9);">5512</div>
<div class="t" style="left:43.56px;top:451.27px;font-size:7px;color:#101a10;transform:scaleX(0.9);">SOH</div>
<div class="t" style="left:79.82px;top:451.27px;font-size:7px;color:#101a10;transform:scaleX(0.9);">SOH</div>
<div class="t" style="left:116.08px;top:451.27px;font-size:7px;color:#101a10;transform:scaleX(0.9);">MM-386:1</div>
<div class="tr" style="left:85.7px;top:451.27px;width:100px;font-size:7px;color:#101a10;"><span style="transform:scaleX(0.9)">2339</span></div>
<div class="t" style="left:188.6px;top:451.27px;font-size:7px;color:#101a10;transform:scaleX(0.9);">PXE875</div>
<div class="t" style="left:224.86px;top:451.27px;font-size:7px;color:#101a10;transform:scaleX(0.9);">Running</div>
<div class="t" style="left:261.12px;top:451.27px;font-size:7px;color:#101a10;transform:scaleX(0.9);">2016-06-...</div>
<div class="t" style="left:297.38px;top:451.27px;font-size:7px;color:#101a10;transform:scaleX(0.9);">2016-06-...</div>
<div class="t" style="left:333.64px;top:451.27px;font-size:7px;color:#101a10;transform:scaleX(0.9);">YV1PS6...</div>
<div class="t" style="left:369.9px;top:451.27px;font-size:7px;color:#101a10;transform:scaleX(0.9);">XRVP1002</div>
<div class="t" style="left:406.16px;top:451.27px;font-size:7px;color:#101a10;transform:scaleX(0.9);">V541</div>
<div class="t" style="left:442.42px;top:451.27px;font-size:7px;color:#101a10;transform:scaleX(0.9);">9681 7760</div>
<div class="t" style="left:514.94px;top:451.27px;font-size:7px;color:#101a10;transform:scaleX(0.9);">VP11</div>
<div class="t" style="left:587.46px;top:451.27px;font-size:7px;color:#101a10;transform:scaleX(0.9);">MM-386:1</div>
<div class="t" style="left:732.5px;top:451.27px;font-size:7px;color:#101a10;transform:scaleX(0.9);">2015-05-19</div>
<div class="t" style="left:7.3px;top:463.92px;font-size:7px;color:#101a10;transform:scaleX(0.9);">5512</div>
<div class="t" style="left:43.56px;top:463.92px;font-size:7px;color:#101a10;transform:scaleX(0.9);">SOH</div>
<div class="t" style="left:79.82px;top:463.92px;font-size:7px;color:#101a10;transform:scaleX(0.9);">SOH</div>
<div class="t" style="left:116.08px;top:463.92px;font-size:7px;color:#101a10;transform:scaleX(0.9);">MM-1520:1</div>
<div class="tr" style="left:85.7px;top:463.92px;width:100px;font-size:7px;color:#101a10;"><span style="transform:scaleX(0.9)">505</span></div>
<div class="t" style="left:188.6px;top:463.92px;font-size:7px;color:#101a10;transform:scaleX(0.9);">KTY713</div>
<div class="t" style="left:224.86px;top:463.92px;font-size:7px;color:#101a10;transform:scaleX(0.9);">Running</div>
<div class="t" style="left:261.12px;top:463.92px;font-size:7px;color:#101a10;transform:scaleX(0.9);">2015-09-...</div>
<div class="t" style="left:297.38px;top:463.92px;font-size:7px;color:#101a10;transform:scaleX(0.9);">2015-09-...</div>
<div class="t" style="left:333.64px;top:463.92px;font-size:7px;color:#101a10;transform:scaleX(0.9);">YV1PSA...</div>
<div class="t" style="left:369.9px;top:463.92px;font-size:7px;color:#101a10;transform:scaleX(0.9);">XRVP1026</div>
<div class="t" style="left:406.16px;top:463.92px;font-size:7px;color:#101a10;transform:scaleX(0.9);">V541</div>
<div class="t" style="left:442.42px;top:463.92px;font-size:7px;color:#101a10;transform:scaleX(0.9);">9681 7774</div>
<div class="t" style="left:514.94px;top:463.92px;font-size:7px;color:#101a10;transform:scaleX(0.9);">VP11</div>
<div class="t" style="left:587.46px;top:463.92px;font-size:7px;color:#101a10;transform:scaleX(0.9);">MM-1520:1</div>
<div class="t" style="left:732.5px;top:463.92px;font-size:7px;color:#101a10;transform:scaleX(0.9);">2015-05-19</div>
<div class="t" style="left:6.7px;top:476.57px;font-size:7px;color:#1a1a1a;transform:scaleX(0.9);">5512</div>
<div class="t" style="left:42.96px;top:476.57px;font-size:7px;color:#1a1a1a;transform:scaleX(0.9);">SOH</div>
<div class="t" style="left:79.22px;top:476.57px;font-size:7px;color:#1a1a1a;transform:scaleX(0.9);">SOH</div>
<div class="t" style="left:115.48px;top:476.57px;font-size:7px;color:#1a1a1a;transform:scaleX(0.9);">MM-1521:1</div>
<div class="tr" style="left:85.1px;top:476.57px;width:100px;font-size:7px;color:#1a1a1a;"><span style="transform:scaleX(0.9)">96</span></div>
<div class="t" style="left:188px;top:476.57px;font-size:7px;color:#1a1a1a;transform:scaleX(0.9);">DZJ575</div>
<div class="t" style="left:224.26px;top:476.57px;font-size:7px;color:#1a1a1a;transform:scaleX(0.9);">Stopped</div>
<div class="t" style="left:260.52px;top:476.57px;font-size:7px;color:#1a1a1a;transform:scaleX(0.9);">2016-08-...</div>
<div class="t" style="left:296.78px;top:476.57px;font-size:7px;color:#1a1a1a;transform:scaleX(0.9);">2016-08-...</div>
<div class="t" style="left:333.04px;top:476.57px;font-size:7px;color:#1a1a1a;transform:scaleX(0.9);">YV1A22...</div>
<div class="t" style="left:369.3px;top:476.57px;font-size:7px;color:#1a1a1a;transform:scaleX(0.9);">XRVP1115</div>
<div class="t" style="left:405.56px;top:476.57px;font-size:7px;color:#1a1a1a;transform:scaleX(0.9);">V541</div>
<div class="t" style="left:441.82px;top:476.57px;font-size:7px;color:#1a1a1a;transform:scaleX(0.9);">9681 7805</div>
<div class="t" style="left:514.34px;top:476.57px;font-size:7px;color:#1a1a1a;transform:scaleX(0.9);">VP11</div>
<div class="t" style="left:586.86px;top:476.57px;font-size:7px;color:#1a1a1a;transform:scaleX(0.9);">MM-1521:1</div>
<div class="t" style="left:731.9px;top:476.57px;font-size:7px;color:#1a1a1a;transform:scaleX(0.9);">2015-05-19</div>
<div class="a" style="left:6px;top:563.7px;width:769px;height:13.8px;background:linear-gradient(#efefef,#e3e3e3);border-top:1px solid #bababa;border-bottom:1px solid #bdbdbd"></div>
<div class="t" style="left:9px;top:567.17px;font-size:7px;color:#222;transform:scaleX(0.9);">Fetched 25 of 25 rows</div>
<svg class="a" style="left:729px;top:565px" width="46" height="11">
<path d="M2 4.5 L4.2 2.8 L6 4 L7.8 2.8 L10.2 4.5 L10 7 L2.2 7 Z" fill="#555"/>
<circle cx="3.7" cy="6.6" r="1.6" fill="#7ab6e6" stroke="#444" stroke-width="0.5"/><circle cx="8.6" cy="6.6" r="1.6" fill="#7ab6e6" stroke="#444" stroke-width="0.5"/>
<rect x="19.5" y="2" width="6.3" height="7" rx="0.6" fill="#8a82d0" stroke="#5a52a0" stroke-width="0.5"/><rect x="24.4" y="2.3" width="1.2" height="6.5" fill="#4b4396"/>
<path d="M18.3 5.6 H22.8 M21 3.6 L23.2 5.6 L21 7.6" stroke="#2fae2f" stroke-width="1.6" fill="none"/>
<path d="M35.2 1.2 L38.5 5" stroke="#d46a1c" stroke-width="1.2"/><path d="M37.2 3.6 L38.4 2.8" stroke="#c03020" stroke-width="1"/>
<path d="M36.8 5.2 L39.8 3.6 L42.4 8.6 L38.5 9.6 Z" fill="#f2c81e"/>
</svg>
<div class="a" style="left:5px;top:578px;width:57.2px;height:12.5px;border:1px solid #c3c3c3;border-bottom-color:#a9a9a9;background:linear-gradient(#fdfdfd,#e4e4e4)"></div>
<div class="tc" style="left:5px;top:580.87px;width:56.7px;font-size:7px;color:#222;"><span style="transform:scaleX(0.9)">Get Result Files</span></div>
<div class="a" style="left:62px;top:578px;width:57.8px;height:12.5px;border:1px solid #c3c3c3;border-bottom-color:#a9a9a9;background:linear-gradient(#fdfdfd,#e4e4e4)"></div>
<div class="tc" style="left:62px;top:580.87px;width:57.3px;font-size:7px;color:#222;"><span style="transform:scaleX(0.9)">View Assignment</span></div>
<div class="a" style="left:119.3px;top:578px;width:58.9px;height:12.5px;border:1px solid #c3c3c3;border-bottom-color:#a9a9a9;background:linear-gradient(#fdfdfd,#e4e4e4)"></div>
<div class="tc" style="left:119.3px;top:580.87px;width:58.4px;font-size:7px;color:#222;"><span style="transform:scaleX(0.9)">Get Log Files</span></div>
<div class="a" style="left:177.7px;top:578px;width:57.8px;height:12.5px;border:1px solid #c3c3c3;border-bottom-color:#a9a9a9;background:linear-gradient(#fdfdfd,#e4e4e4)"></div>
<div class="tc" style="left:177.7px;top:580.87px;width:57.3px;font-size:7px;color:#222;"><span style="transform:scaleX(0.9)">Plot Route</span></div>
<div class="a" style="left:235px;top:578px;width:57.8px;height:12.5px;border:1px solid #c3c3c3;border-bottom-color:#a9a9a9;background:linear-gradient(#fdfdfd,#e4e4e4)"></div>
<div class="tc" style="left:235px;top:580.87px;width:57.3px;font-size:7px;color:#222;"><span style="transform:scaleX(0.9)">New Task</span></div>
<div class="a" style="left:292.3px;top:578px;width:75.5px;height:12.5px;border:1px solid #c3c3c3;border-bottom-color:#a9a9a9;background:linear-gradient(#fdfdfd,#e4e4e4)"></div>
<div class="tc" style="left:292.3px;top:580.87px;width:75px;font-size:7px;color:#222;"><span style="transform:scaleX(0.9)">View/Edit Schedule</span></div>
<div class="a" style="left:367.3px;top:578px;width:57.5px;height:12.5px;border:1px solid #c3c3c3;border-bottom-color:#a9a9a9;background:linear-gradient(#fdfdfd,#e4e4e4)"></div>
<div class="tc" style="left:367.3px;top:580.87px;width:57px;font-size:7px;color:#222;"><span style="transform:scaleX(0.9)">Refresh</span></div>
<div class="a" style="left:424.3px;top:578px;width:58px;height:12.5px;border:1px solid #c3c3c3;border-bottom-color:#a9a9a9;background:linear-gradient(#fdfdfd,#e4e4e4)"></div>
<div class="tc" style="left:424.3px;top:580.87px;width:57.5px;font-size:7px;color:#222;"><span style="transform:scaleX(0.9)">View Car</span></div>
<div class="a" style="left:481.8px;top:578px;width:57.9px;height:12.5px;border:1px solid #c3c3c3;border-bottom-color:#a9a9a9;background:linear-gradient(#fdfdfd,#e4e4e4)"></div>
<div class="tc" style="left:481.8px;top:580.87px;width:57.4px;font-size:7px;color:#222;"><span style="transform:scaleX(0.9)">Save Headers</span></div>
<div class="a" style="left:604px;top:578px;width:86.5px;height:12.5px;border:1px solid #c3c3c3;border-bottom-color:#a9a9a9;background:linear-gradient(#fdfdfd,#e4e4e4)"></div>
<div class="tc" style="left:604px;top:580.87px;width:86.5px;font-size:7px;color:#222;"><span style="transform:scaleX(0.9)">Stop Assignment</span></div>
<div class="a" style="left:694px;top:578px;width:80.6px;height:12.5px;border:1px solid #dadada;background:linear-gradient(#fbfbfb,#efefef)"></div>
<div class="tc" style="left:693px;top:580.87px;width:81.6px;font-size:7px;color:#b8b8b8;"><span style="transform:scaleX(0.9)">Force Stop Assignment</span></div>
<div class="a" style="left:602px;top:575.6px;width:90.4px;height:16.8px;border:1.5px solid #e4161c;border-radius:6px"></div>
<div class="a" style="left:0px;top:0px;width:781px;height:1px;background:#7db5f2"></div>
<div class="a" style="left:0px;top:0px;width:1px;height:598px;background:#7db5f2"></div>
<div class="a" style="left:780px;top:0px;width:1px;height:598px;background:#7db5f2"></div>
<div class="a" style="left:0px;top:598px;width:781px;height:2px;background:#0b0f16"></div>
<div class="a" style="left:291.5px;top:598px;width:27.5px;height:2px;background:#3a3d42"></div>
</body></html>
